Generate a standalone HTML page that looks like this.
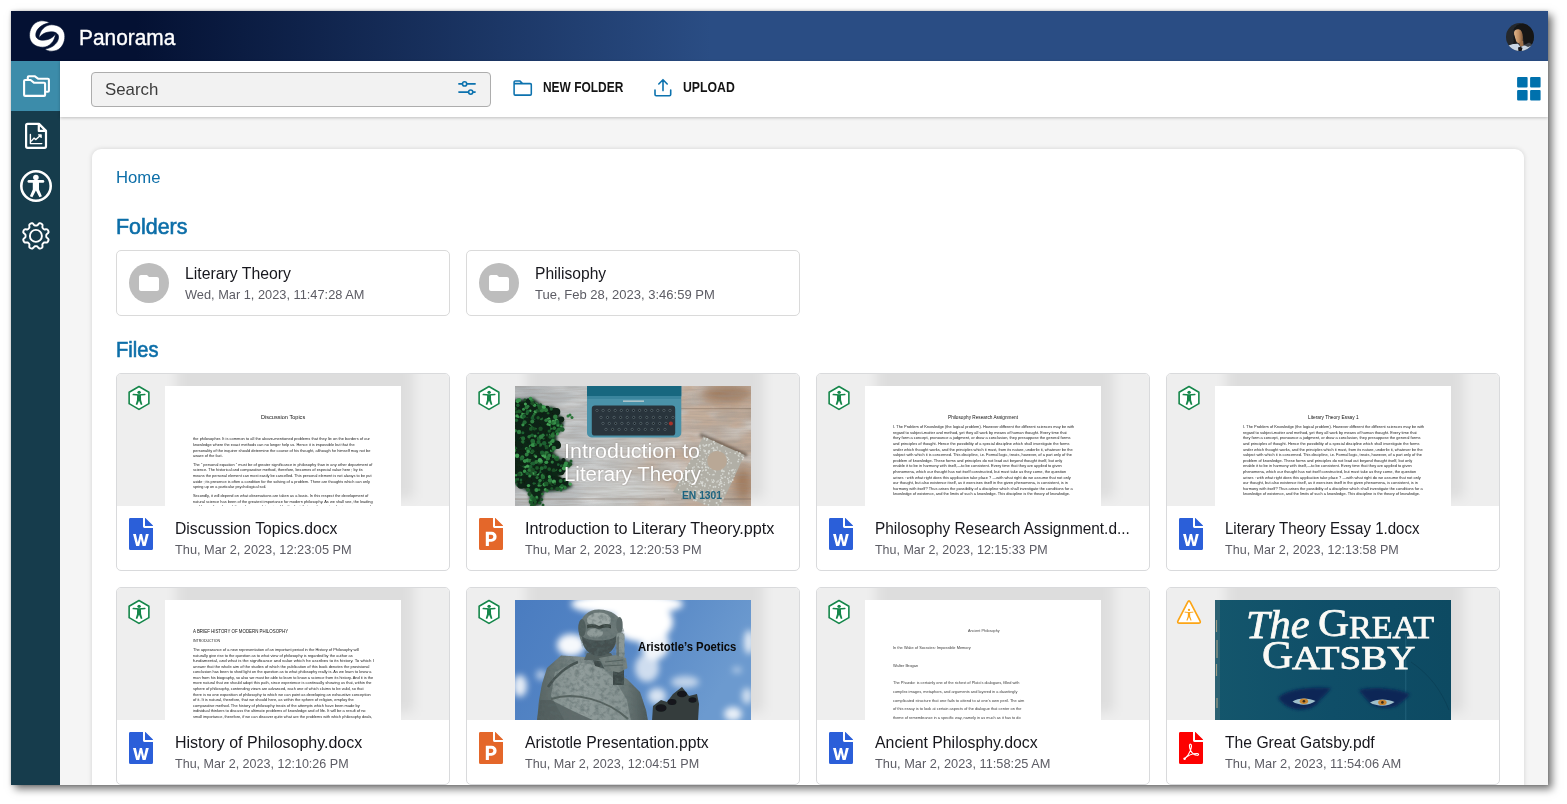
<!DOCTYPE html>
<html lang="en">
<head>
<meta charset="utf-8">
<title>Panorama</title>
<style>
*{box-sizing:border-box;margin:0;padding:0}
html,body{width:1567px;height:804px;overflow:hidden;background:#fff;font-family:"Liberation Sans",sans-serif}
#app{position:absolute;left:11px;top:11px;width:1537px;height:774px;background:#f5f5f5;box-shadow:4px 4px 8px rgba(0,0,0,.55),0 0 3px rgba(0,0,0,.18);overflow:hidden}
#pg{position:absolute;left:-11px;top:-11px;width:1567px;height:804px}
#pg>*,#pg svg{position:absolute}
.t{position:absolute;white-space:nowrap;line-height:1;transform-origin:0 0;display:block}
#hdr{left:11px;top:11px;width:1537px;height:50px;background:linear-gradient(90deg,#041133 0,#041133 125px,#2a4d84 700px,#2a4d84 100%)}
#side{left:11px;top:61px;width:49px;height:724px;background:#163c4c}
#sact{left:11px;top:61px;width:49px;height:50px;background:#3c8caa}
#tool{left:60px;top:61px;width:1488px;height:56px;background:#fff;box-shadow:0 1px 3px rgba(0,0,0,.22)}
#search{left:91px;top:72px;width:400px;height:35px;border:1px solid #adadad;border-radius:4px;background:#f2f2f2}
#panel{left:92px;top:149px;width:1432px;height:700px;background:#fff;border-radius:9px;box-shadow:0 0 5px rgba(0,0,0,.14)}
.fold{width:334px;height:66px;top:250px;border:1px solid #dadada;border-radius:5px;background:#fff}
.circ{width:40px;height:40px;top:263px;border-radius:50%;background:#bdbdbd}
.card{width:334px;height:198px;border:1px solid #d9dadc;border-radius:5px;background:#fff;overflow:hidden}
.card .top{position:absolute;left:0;top:0;width:332px;height:132px;background:#eee;overflow:hidden}
.card .th{position:absolute;left:48px;top:12px;width:236px;height:120px;background:#fff;overflow:hidden}
.card .sh{position:absolute;left:60px;top:-20px;width:236px;height:144px;background:rgba(0,0,0,.07);filter:blur(6px)}
.card svg{position:absolute}

</style>
</head>
<body>
<div id="app"><div id="pg">
<div id="hdr"></div>
<div id="side"></div>
<div id="sact"></div>
<div id="tool"></div>
<div id="search"></div>
<div id="panel"></div>
<div class="fold" style="left:116px"></div>
<div class="fold" style="left:466px"></div>
<div class="circ" style="left:129px"></div>
<div class="circ" style="left:479px"></div>
<!--ICONS-->
<svg style="left:20px;top:12px" width="60" height="48" viewBox="0 0 1005 804"><g fill="#fff" stroke="#041133" stroke-width="10" stroke-linejoin="round"><path d="M494 182C440 146 345 128 262 180C183 234 148 340 163 432C178 527 270 592 382 590C492 588 584 494 594 364C557 430 478 470 392 472C314 474 264 440 264 384C264 302 342 206 494 182Z"/><path d="M494 182C440 146 345 128 262 180C183 234 148 340 163 432C178 527 270 592 382 590C492 588 584 494 594 364C557 430 478 470 392 472C314 474 264 440 264 384C264 302 342 206 494 182Z" transform="rotate(180 455 402)"/></g></svg>
<svg style="left:11px;top:61px" width="49" height="50" viewBox="0 0 49 50" fill="none" stroke="#fff" stroke-width="2.1" stroke-linejoin="round" stroke-linecap="round"><path d="M16.8 18.4V16.2a1 1 0 0 1 1-1H23.6L27.4 17.8H36.9a1 1 0 0 1 1 1V29.8a1 1 0 0 1-1 1H35.4"/><path d="M14.1 19H19.6L23.2 21.8H33.1a1 1 0 0 1 1 1V33.9a1 1 0 0 1-1 1H14.1a1 1 0 0 1-1-1V20a1 1 0 0 1 1-1Z"/></svg>
<svg style="left:11px;top:111px" width="49" height="50" viewBox="0 0 49 50" fill="none" stroke="#fff" stroke-linejoin="round" stroke-linecap="round"><path stroke-width="2.2" d="M16.6 12.9H28L35 19.9V35.3a1.5 1.5 0 0 1-1.5 1.5H16.6a1.5 1.5 0 0 1-1.5-1.5V14.4a1.5 1.5 0 0 1 1.5-1.5ZM27.8 13.2V19.9H34.8"/><path stroke-width="1.4" d="M19.4 23.4V32.6H30.8M20.6 29.9L23 27.1L24.9 28.6L29.6 24.2M27.6 23.9H30.1V26.4"/></svg>
<svg style="left:11px;top:161px" width="49" height="50" viewBox="0 0 49 50"><circle cx="25" cy="25" r="14.7" fill="none" stroke="#fff" stroke-width="2.6"/><circle cx="24.9" cy="16.5" r="2.8" fill="#fff"/><rect x="16.5" y="19" width="16.8" height="2.8" rx="1.4" fill="#fff"/><path fill="#fff" d="M21.8 20.5H28V28.4L30.9 35.2L28.4 36.3L24.9 29.4L21.4 36.3L18.9 35.2L21.8 28.4Z"/></svg>
<svg style="left:0;top:0" width="72" height="262" viewBox="0 0 72 262" fill="none" stroke="#fff" stroke-width="1.9" stroke-linejoin="round"><path d="M35.90 225.55 L36.44 225.55 L36.99 225.49 L37.61 225.09 L38.44 223.97 L39.29 223.27 L40.01 223.25 L40.68 223.44 L41.33 223.71 L41.94 224.05 L42.44 224.57 L42.54 225.67 L42.33 227.05 L42.49 227.77 L42.84 228.20 L43.22 228.58 L43.60 228.96 L44.03 229.31 L44.75 229.47 L46.13 229.26 L47.23 229.36 L47.75 229.86 L48.09 230.47 L48.36 231.12 L48.55 231.79 L48.53 232.51 L47.83 233.36 L46.71 234.19 L46.31 234.81 L46.25 235.36 L46.25 235.90 L46.25 236.44 L46.31 236.99 L46.71 237.61 L47.83 238.44 L48.53 239.29 L48.55 240.01 L48.36 240.68 L48.09 241.33 L47.75 241.94 L47.23 242.44 L46.13 242.54 L44.75 242.33 L44.03 242.49 L43.60 242.84 L43.22 243.22 L42.84 243.60 L42.49 244.03 L42.33 244.75 L42.54 246.13 L42.44 247.23 L41.94 247.75 L41.33 248.09 L40.68 248.36 L40.01 248.55 L39.29 248.53 L38.44 247.83 L37.61 246.71 L36.99 246.31 L36.44 246.25 L35.90 246.25 L35.36 246.25 L34.81 246.31 L34.19 246.71 L33.36 247.83 L32.51 248.53 L31.79 248.55 L31.12 248.36 L30.47 248.09 L29.86 247.75 L29.36 247.23 L29.26 246.13 L29.47 244.75 L29.31 244.03 L28.96 243.60 L28.58 243.22 L28.20 242.84 L27.77 242.49 L27.05 242.33 L25.67 242.54 L24.57 242.44 L24.05 241.94 L23.71 241.33 L23.44 240.68 L23.25 240.01 L23.27 239.29 L23.97 238.44 L25.09 237.61 L25.49 236.99 L25.55 236.44 L25.55 235.90 L25.55 235.36 L25.49 234.81 L25.09 234.19 L23.97 233.36 L23.27 232.51 L23.25 231.79 L23.44 231.12 L23.71 230.47 L24.05 229.86 L24.57 229.36 L25.67 229.26 L27.05 229.47 L27.77 229.31 L28.20 228.96 L28.58 228.58 L28.96 228.20 L29.31 227.77 L29.47 227.05 L29.26 225.67 L29.36 224.57 L29.86 224.05 L30.47 223.71 L31.12 223.44 L31.79 223.25 L32.51 223.27 L33.36 223.97 L34.19 225.09 L34.81 225.49 L35.36 225.55Z"/><circle cx="35.9" cy="235.9" r="6"/></svg>
<svg style="left:450px;top:70px" width="290" height="36" viewBox="450 70 290 36" fill="none" stroke="#0c72ae" stroke-width="1.6" stroke-linecap="round" stroke-linejoin="round"><path d="M458.9 83.9H461.9M467.3 83.9H475.1M458.9 92.1H468M473.4 92.1H475.1"/><circle cx="464.6" cy="83.9" r="2.1"/><circle cx="470.7" cy="92.1" r="2.1"/><path stroke-width="1.55" d="M514.1 83.6V82a1.1 1.1 0 0 1 1.1-1.1H519.8L522.6 83.6H530.2a1.1 1.1 0 0 1 1.1 1.1V94a1.1 1.1 0 0 1-1.1 1.1H515.2a1.1 1.1 0 0 1-1.1-1.1ZM514.1 83.6H522.6"/><path stroke-width="1.6" d="M655 90V94.6a1.2 1.2 0 0 0 1.2 1.2H669.5a1.2 1.2 0 0 0 1.2-1.2V90M663 90.6V79.8M658.8 84L663 79.7L667.2 84"/></svg>
<svg style="left:1517px;top:77px" width="24" height="24" viewBox="0 0 24 24" fill="#0071ad"><rect x="0.1" y="0" width="10.5" height="10.6" rx="1"/><rect x="13.1" y="0" width="10.5" height="10.6" rx="1"/><rect x="0.1" y="13" width="10.5" height="10.6" rx="1"/><rect x="13.1" y="13" width="10.5" height="10.6" rx="1"/></svg>
<svg style="left:129px;top:263px" width="40" height="40" viewBox="0 0 40 40"><path transform="translate(8 8)" fill="#fff" d="M10 4H4c-1.1 0-1.99.9-1.99 2L2 18c0 1.100.9 2 2 2h16c1.100 0 2-.9 2-2V8c0-1.100-.9-2-2-2h-8l-2-2z"/></svg>
<svg style="left:479px;top:263px" width="40" height="40" viewBox="0 0 40 40"><path transform="translate(8 8)" fill="#fff" d="M10 4H4c-1.1 0-1.99.9-1.99 2L2 18c0 1.100.9 2 2 2h16c1.100 0 2-.9 2-2V8c0-1.100-.9-2-2-2h-8l-2-2z"/></svg>
<svg style="left:1506.300px;top:23px" width="28" height="28" viewBox="0 0 28 28"><defs><clipPath id="avc"><circle cx="14" cy="14" r="14"/></clipPath><filter id="avb" x="-10%" y="-10%" width="120%" height="120%"><feGaussianBlur stdDeviation=".55"/></filter><linearGradient id="avs" x1="0" x2="1" y1="0" y2="0"><stop offset="0" stop-color="#e0b48a"/><stop offset=".55" stop-color="#c08f63"/><stop offset="1" stop-color="#7d5638"/></linearGradient></defs>
<g clip-path="url(#avc)"><rect width="28" height="28" fill="#25282c"/><g filter="url(#avb)">
<path d="M7.500 8C8 2 16 -1 22 2C28 5 29 14 27 20C26 24 22 25 19 23L17 14L13 6L9 7Z" fill="#131518"/>
<path d="M8 9.500C8.500 6.500 12 5.500 14.500 7C16.500 9 17.200 13 16.800 17C16.500 19.500 14.500 20.800 12.500 20.300C10 19.500 8.200 15 8 9.500Z" fill="url(#avs)"/>
<path d="M13.200 19.500L17 17.500L17.600 23L14 23.500Z" fill="#9c6f4b"/>
<path d="M7.500 10C8 14 8 18 7 22L10.500 21L9.500 16Z" fill="#131518"/>
<path d="M1 23L7 21L12 20.800L14.500 24L18 22.500L23 21L28 23V29H0Z" fill="#c9d5e3"/>
<path d="M12 24.500L14.500 23.800L16.500 25L15.500 28.500H12.500Z" fill="#17191c"/>
<path d="M18 22L23 19.500L27 22L22 24Z" fill="#3d4248"/>
</g></g></svg>

<div class="card" style="left:116px;top:373px"><div class="top"><div class="sh"></div><div class="th"><span class="t" style="left:95.98px;top:29.41px;font-size:5.6px;font-weight:normal;color:#111;transform:scaleX(0.9965)">Discussion Topics</span><span class="t" style="left:27.86px;top:52.36px;font-size:3.8px;font-weight:normal;color:#1a1a1a;transform:scaleX(1.0491)">the philosopher. It is common to all the above-mentioned problems that they lie on the borders of our</span><span class="t" style="left:27.86px;top:58.02px;font-size:3.8px;font-weight:normal;color:#1a1a1a;transform:scaleX(1.0234)">knowledge where the exact methods can no longer help us. Hence it is impossible but that the</span><span class="t" style="left:27.86px;top:63.68px;font-size:3.8px;font-weight:normal;color:#1a1a1a;transform:scaleX(1.0415)">personality of the inquirer should determine the course of his thought, although he himself may not be</span><span class="t" style="left:27.86px;top:69.18px;font-size:3.8px;font-weight:normal;color:#1a1a1a;transform:scaleX(1.0217)">aware of the fact.</span><span class="t" style="left:27.86px;top:77.75px;font-size:3.8px;font-weight:normal;color:#1a1a1a;transform:scaleX(1.0413)">The “ personal equation ” must be of greater significance in philosophy than in any other department of</span><span class="t" style="left:27.86px;top:83.41px;font-size:3.8px;font-weight:normal;color:#1a1a1a;transform:scaleX(1.0270)">science. The historical and comparative method, therefore, becomes of especial value here ; by its</span><span class="t" style="left:27.86px;top:89.07px;font-size:3.8px;font-weight:normal;color:#1a1a1a;transform:scaleX(1.0172)">means the personal element can most easily be cancelled. This personal element is not always to be put</span><span class="t" style="left:27.86px;top:94.73px;font-size:3.8px;font-weight:normal;color:#1a1a1a;transform:scaleX(1.0264)">aside ; its presence is often a condition for the solving of a problem. There are thoughts which can only</span><span class="t" style="left:27.86px;top:100.39px;font-size:3.8px;font-weight:normal;color:#1a1a1a;transform:scaleX(1.0142)">spring up on a particular psychological soil.</span><span class="t" style="left:27.86px;top:108.96px;font-size:3.8px;font-weight:normal;color:#1a1a1a;transform:scaleX(1.0284)">Secondly, it will depend on what observations are taken as a basis. In this respect the development of</span><span class="t" style="left:27.86px;top:114.62px;font-size:3.8px;font-weight:normal;color:#1a1a1a;transform:scaleX(1.0285)">natural science has been of the greatest importance for modern philosophy. As we shall see, the leading</span><span class="t" style="left:27.85px;top:120.12px;font-size:3.8px;font-weight:normal;color:#1a1a1a;transform:scaleX(1.0659)">problems of modern philosophy were determined by the fact that modern natural science arose and</span></div><svg style="left:0;top:0" width="48" height="48" viewBox="0 0 48 48"><polygon points="22.00,12.55 31.87,18.25 31.87,29.65 22.00,35.35 12.13,29.65 12.13,18.25" fill="#fff" stroke="#15864a" stroke-width="1.6" stroke-linejoin="round"/><g transform="translate(22.0 23.95)" fill="#15864a"><circle cx="0.1" cy="-5.6" r="1.7"/><path d="M-5.7 -3.4Q0 -2.5 5.8 -3.4" fill="none" stroke="#15864a" stroke-width="1.6" stroke-linecap="round"/><path d="M-1.9 -2.9H2L2.1 2L3.4 6.6L1.9 7.1L0.05 2.8L-1.8 7.1L-3.3 6.6L-2 2Z"/></g></svg></div><svg style="left:12px;top:144px" width="24" height="32" viewBox="0 0 24 32"><path fill="#2b5fd9" d="M1.4 0H14V8.6a1.4 1.4 0 0 0 1.4 1.4H24V30.5a1.5 1.5 0 0 1-1.5 1.5H1.5A1.5 1.5 0 0 1 0 30.5V1.4A1.4 1.4 0 0 1 1.4 0ZM16 0H16.4L24 7.6V8H16Z"/><path fill="#fff" d="M4 16H6.9L8.8 24.4L10.8 16H13L15 24.4L16.9 16H19.8L16.6 28H13.6L11.9 20.8L10.2 28H7.2Z"/></svg></div>
<div class="card" style="left:466px;top:373px"><div class="top"><div class="sh"></div><div class="th"><svg style="left:0;top:0" width="236" height="121" viewBox="0 0 236 121"><defs>
<linearGradient id="wd" x1="0" x2="1" y1="0" y2="0"><stop offset="0" stop-color="#a9aeb1"/><stop offset=".28" stop-color="#bcbfc0"/><stop offset=".5" stop-color="#c3c2bf"/><stop offset=".72" stop-color="#bdb2a8"/><stop offset="1" stop-color="#b3a293"/></linearGradient>
<linearGradient id="mk" x1="0" x2="1" y1="0" y2="0"><stop offset=".4" stop-color="#000"/><stop offset=".72" stop-color="#fff"/></linearGradient>
<mask id="mr"><rect width="236" height="121" fill="url(#mk)"/></mask>
<filter id="b2" x="-20%" y="-20%" width="140%" height="140%"><feGaussianBlur stdDeviation="1.6"/></filter>
<filter id="b1" x="-20%" y="-20%" width="140%" height="140%"><feGaussianBlur stdDeviation=".55"/></filter>
<filter id="b4" x="-30%" y="-30%" width="160%" height="160%"><feGaussianBlur stdDeviation="5"/></filter>
<filter id="gr" x="0" y="0" width="100%" height="100%"><feTurbulence type="fractalNoise" baseFrequency=".03 .45" numOctaves="3" seed="4"/><feColorMatrix values="0 0 0 0 .33  0 0 0 0 .29  0 0 0 0 .26  1.3 .3 0 0 -.6"/></filter>
<filter id="bl" x="0" y="0" width="100%" height="100%"><feTurbulence type="fractalNoise" baseFrequency=".035 .075" numOctaves="3" seed="9"/><feColorMatrix values="0 0 0 0 .56  0 0 0 0 .41  0 0 0 0 .31  3 0 0 0 -1.05"/></filter>
<filter id="lt" x="0" y="0" width="100%" height="100%"><feTurbulence type="fractalNoise" baseFrequency=".02 .06" numOctaves="2" seed="21"/><feColorMatrix values="0 0 0 0 .84  0 0 0 0 .85  0 0 0 0 .85  0 2.4 0 0 -1.0"/></filter>
</defs>
<rect width="236" height="121" fill="url(#wd)"/>
<rect width="236" height="121" filter="url(#lt)" opacity=".7"/>
<g mask="url(#mr)"><rect width="236" height="121" filter="url(#bl)" opacity=".85"/></g>
<g filter="url(#b4)" opacity=".8"><ellipse cx="212" cy="8" rx="26" ry="9" fill="#99704f"/><ellipse cx="228" cy="98" rx="9" ry="16" fill="#9a6f50"/><ellipse cx="110" cy="104" rx="46" ry="9" fill="#d2d4d3"/></g>
<rect width="236" height="121" filter="url(#gr)" opacity=".6"/>
<path d="M166 22.7H236M0 113H150M166 113H236" stroke="#6d5a4b" stroke-width=".7" opacity=".6"/>
<rect x="72" y="-4" width="94.3" height="55.4" rx="4.5" fill="#4a92a9"/>
<path d="M72 0H166.3V10.3H72Z" fill="#17677f"/>
<path d="M72.3 10.300H166V13H72.3Z" fill="#3a859d"/>
<rect x="108" y="14.500" width="21" height="1.300" fill="#c5d0d3"/>
<rect x="76.8" y="19.6" width="83.4" height="30" rx="3.2" fill="#29343c"/>
<g filter="url(#b1)"><circle cx="82.0" cy="24.4" r="1.1" fill="#10181d" stroke="#76868d" stroke-width=".55"/><circle cx="88.1" cy="24.4" r="1.1" fill="#10181d" stroke="#76868d" stroke-width=".55"/><circle cx="94.2" cy="24.4" r="1.1" fill="#10181d" stroke="#76868d" stroke-width=".55"/><circle cx="100.2" cy="24.4" r="1.1" fill="#10181d" stroke="#76868d" stroke-width=".55"/><circle cx="106.3" cy="24.4" r="1.1" fill="#10181d" stroke="#76868d" stroke-width=".55"/><circle cx="112.4" cy="24.4" r="1.1" fill="#10181d" stroke="#76868d" stroke-width=".55"/><circle cx="118.5" cy="24.4" r="1.1" fill="#10181d" stroke="#76868d" stroke-width=".55"/><circle cx="124.6" cy="24.4" r="1.1" fill="#10181d" stroke="#76868d" stroke-width=".55"/><circle cx="130.7" cy="24.4" r="1.1" fill="#10181d" stroke="#76868d" stroke-width=".55"/><circle cx="136.8" cy="24.4" r="1.1" fill="#10181d" stroke="#76868d" stroke-width=".55"/><circle cx="142.8" cy="24.4" r="1.1" fill="#10181d" stroke="#76868d" stroke-width=".55"/><circle cx="148.9" cy="24.4" r="1.1" fill="#10181d" stroke="#76868d" stroke-width=".55"/><circle cx="155.0" cy="24.4" r="1.1" fill="#10181d" stroke="#76868d" stroke-width=".55"/><circle cx="86.0" cy="31.4" r="1.1" fill="#10181d" stroke="#76868d" stroke-width=".55"/><circle cx="92.5" cy="31.4" r="1.1" fill="#10181d" stroke="#76868d" stroke-width=".55"/><circle cx="99.1" cy="31.4" r="1.1" fill="#10181d" stroke="#76868d" stroke-width=".55"/><circle cx="105.6" cy="31.4" r="1.1" fill="#10181d" stroke="#76868d" stroke-width=".55"/><circle cx="112.2" cy="31.4" r="1.1" fill="#10181d" stroke="#76868d" stroke-width=".55"/><circle cx="118.7" cy="31.4" r="1.1" fill="#10181d" stroke="#76868d" stroke-width=".55"/><circle cx="125.3" cy="31.4" r="1.1" fill="#10181d" stroke="#76868d" stroke-width=".55"/><circle cx="131.8" cy="31.4" r="1.1" fill="#10181d" stroke="#76868d" stroke-width=".55"/><circle cx="138.4" cy="31.4" r="1.1" fill="#10181d" stroke="#76868d" stroke-width=".55"/><circle cx="144.9" cy="31.4" r="1.1" fill="#10181d" stroke="#76868d" stroke-width=".55"/><circle cx="151.5" cy="31.4" r="1.1" fill="#10181d" stroke="#76868d" stroke-width=".55"/><circle cx="158.0" cy="31.4" r="1.1" fill="#10181d" stroke="#76868d" stroke-width=".55"/><circle cx="88.0" cy="37.4" r="1.1" fill="#10181d" stroke="#76868d" stroke-width=".55"/><circle cx="94.3" cy="37.4" r="1.1" fill="#10181d" stroke="#76868d" stroke-width=".55"/><circle cx="100.6" cy="37.4" r="1.1" fill="#10181d" stroke="#76868d" stroke-width=".55"/><circle cx="106.9" cy="37.4" r="1.1" fill="#10181d" stroke="#76868d" stroke-width=".55"/><circle cx="113.2" cy="37.4" r="1.1" fill="#10181d" stroke="#76868d" stroke-width=".55"/><circle cx="119.5" cy="37.4" r="1.1" fill="#10181d" stroke="#76868d" stroke-width=".55"/><circle cx="125.8" cy="37.4" r="1.1" fill="#10181d" stroke="#76868d" stroke-width=".55"/><circle cx="132.1" cy="37.4" r="1.1" fill="#10181d" stroke="#76868d" stroke-width=".55"/><circle cx="138.4" cy="37.4" r="1.1" fill="#10181d" stroke="#76868d" stroke-width=".55"/><circle cx="144.7" cy="37.4" r="1.1" fill="#10181d" stroke="#76868d" stroke-width=".55"/><circle cx="151.0" cy="37.4" r="1.1" fill="#10181d" stroke="#76868d" stroke-width=".55"/><circle cx="91.0" cy="43.4" r="1.1" fill="#10181d" stroke="#76868d" stroke-width=".55"/><circle cx="97.6" cy="43.4" r="1.1" fill="#10181d" stroke="#76868d" stroke-width=".55"/><circle cx="104.1" cy="43.4" r="1.1" fill="#10181d" stroke="#76868d" stroke-width=".55"/><circle cx="110.7" cy="43.4" r="1.1" fill="#10181d" stroke="#76868d" stroke-width=".55"/><circle cx="117.2" cy="43.4" r="1.1" fill="#10181d" stroke="#76868d" stroke-width=".55"/><circle cx="123.8" cy="43.4" r="1.1" fill="#10181d" stroke="#76868d" stroke-width=".55"/><circle cx="130.3" cy="43.4" r="1.1" fill="#10181d" stroke="#76868d" stroke-width=".55"/><circle cx="136.9" cy="43.4" r="1.1" fill="#10181d" stroke="#76868d" stroke-width=".55"/><circle cx="143.4" cy="43.4" r="1.1" fill="#10181d" stroke="#76868d" stroke-width=".55"/><circle cx="150.0" cy="43.4" r="1.1" fill="#10181d" stroke="#76868d" stroke-width=".55"/><circle cx="155.9" cy="37.5" r="2" fill="#a8322a"/></g>
<polygon points="7.3,13.4 18,11.9 28.9,21.1 38.1,21.1 42.8,27.3 48.9,35 47.4,44.3 41.2,48.9 42.8,59.7 38.1,65.9 44.3,72.1 58.2,76.7 48.9,84.4 44.3,90.6 58.2,99.9 48.9,104.5 28.9,106 25.8,118.4 16.5,121 13.4,106 -2,96.8 -2,13.4" fill="#0c2515" filter="url(#b2)"/>
<g filter="url(#b1)"><circle cx="45.7" cy="33.7" r="1.4" fill="#2d7b3f"/><circle cx="0.2" cy="87.5" r="1.8" fill="#2a7439"/><circle cx="15.9" cy="109.6" r="1.8" fill="#2d7b3f"/><circle cx="11.9" cy="34.7" r="1.3" fill="#2a7439"/><circle cx="16.0" cy="60.6" r="2.1" fill="#43a054"/><circle cx="38.4" cy="70.2" r="1.9" fill="#2a7439"/><circle cx="42.7" cy="38.8" r="2.1" fill="#1f6030"/><circle cx="17.0" cy="59.0" r="1.3" fill="#2a7439"/><circle cx="12.3" cy="30.5" r="1.8" fill="#2d7b3f"/><circle cx="11.5" cy="62.6" r="1.6" fill="#359049"/><circle cx="36.0" cy="42.8" r="2.1" fill="#43a054"/><circle cx="8.5" cy="25.8" r="1.2" fill="#246a34"/><circle cx="38.6" cy="55.2" r="2.2" fill="#246a34"/><circle cx="17.7" cy="54.1" r="2.0" fill="#1f6030"/><circle cx="25.2" cy="99.1" r="1.5" fill="#43a054"/><circle cx="9.5" cy="70.8" r="1.1" fill="#2d7b3f"/><circle cx="3.4" cy="30.9" r="1.2" fill="#359049"/><circle cx="14.9" cy="41.6" r="1.7" fill="#43a054"/><circle cx="7.0" cy="89.2" r="1.5" fill="#1c5a2b"/><circle cx="33.3" cy="29.3" r="1.4" fill="#2a7439"/><circle cx="38.1" cy="51.4" r="1.8" fill="#246a34"/><circle cx="27.2" cy="91.1" r="1.3" fill="#2d7b3f"/><circle cx="27.4" cy="49.7" r="1.1" fill="#246a34"/><circle cx="20.8" cy="85.8" r="2.1" fill="#1a4f27"/><circle cx="7.1" cy="32.7" r="2.0" fill="#43a054"/><circle cx="6.7" cy="32.4" r="1.3" fill="#1f6030"/><circle cx="36.5" cy="64.5" r="1.5" fill="#359049"/><circle cx="2.3" cy="15.8" r="1.7" fill="#43a054"/><circle cx="22.2" cy="27.2" r="1.3" fill="#246a34"/><circle cx="31.5" cy="61.1" r="2.2" fill="#1a4f27"/><circle cx="6.9" cy="54.8" r="1.3" fill="#1c5a2b"/><circle cx="11.8" cy="18.5" r="2.0" fill="#2d7b3f"/><circle cx="16.5" cy="96.1" r="1.4" fill="#246a34"/><circle cx="50.2" cy="102.0" r="1.6" fill="#2d7b3f"/><circle cx="30.4" cy="103.6" r="1.5" fill="#43a054"/><circle cx="18" cy="114" r="1.5" fill="#1f6030"/><circle cx="30.5" cy="22.1" r="1.1" fill="#359049"/><circle cx="29.2" cy="86.1" r="1.2" fill="#246a34"/><circle cx="23.8" cy="95.7" r="2.2" fill="#2d7b3f"/><circle cx="31.9" cy="97.5" r="1.2" fill="#246a34"/><circle cx="36.5" cy="41.7" r="2.1" fill="#1f6030"/><circle cx="8.9" cy="26.6" r="1.7" fill="#2a7439"/><circle cx="22.2" cy="43.2" r="1.7" fill="#43a054"/><circle cx="25.5" cy="73.1" r="1.4" fill="#2d7b3f"/><circle cx="-1.1" cy="50.4" r="1.3" fill="#2d7b3f"/><circle cx="14.6" cy="98.5" r="1.2" fill="#1c5a2b"/><circle cx="34.8" cy="39.4" r="1.3" fill="#1c5a2b"/><circle cx="36.2" cy="48.2" r="2.0" fill="#43a054"/><circle cx="16.0" cy="115.7" r="2.3" fill="#1c5a2b"/><circle cx="25" cy="117" r="1.5" fill="#1a4f27"/><circle cx="15.2" cy="28.8" r="1.4" fill="#1a4f27"/><circle cx="19.4" cy="33.9" r="1.1" fill="#1f6030"/><circle cx="55.2" cy="98.1" r="1.7" fill="#43a054"/><circle cx="13.9" cy="54.6" r="1.3" fill="#43a054"/><circle cx="3.2" cy="98.8" r="2.1" fill="#1c5a2b"/><circle cx="40.5" cy="83.6" r="1.7" fill="#1f6030"/><circle cx="46.3" cy="39.9" r="1.5" fill="#43a054"/><circle cx="29.3" cy="73.0" r="2.1" fill="#1f6030"/><circle cx="7.2" cy="24.3" r="1.8" fill="#246a34"/><circle cx="9.5" cy="85.3" r="1.8" fill="#359049"/><circle cx="20.5" cy="25.5" r="1.8" fill="#43a054"/><circle cx="28.4" cy="79.6" r="1.7" fill="#43a054"/><circle cx="12.6" cy="74.3" r="2.1" fill="#359049"/><circle cx="40.2" cy="29.7" r="1.3" fill="#2a7439"/><circle cx="36.2" cy="58.1" r="1.5" fill="#359049"/><circle cx="20.9" cy="18.7" r="2.1" fill="#359049"/><circle cx="20.7" cy="84.2" r="1.9" fill="#2a7439"/><circle cx="13.2" cy="14.7" r="2.0" fill="#43a054"/><circle cx="28.7" cy="44.2" r="1.9" fill="#246a34"/><circle cx="42.2" cy="47.7" r="1.7" fill="#359049"/><circle cx="20.0" cy="88.4" r="2.2" fill="#1a4f27"/><circle cx="32.0" cy="105.0" r="1.2" fill="#1c5a2b"/><circle cx="24.3" cy="27.6" r="1.3" fill="#1f6030"/><circle cx="56" cy="75" r="1.5" fill="#1c5a2b"/><circle cx="24.7" cy="76.7" r="1.9" fill="#1a4f27"/><circle cx="-0.1" cy="57.9" r="1.9" fill="#1f6030"/><circle cx="27.7" cy="82.4" r="1.4" fill="#1c5a2b"/><circle cx="20" cy="118" r="1.5" fill="#1a4f27"/><circle cx="20.1" cy="43.5" r="1.3" fill="#1a4f27"/><circle cx="35.1" cy="50.9" r="1.8" fill="#1c5a2b"/><circle cx="23.3" cy="88.4" r="1.4" fill="#43a054"/><circle cx="14.5" cy="69.8" r="1.5" fill="#246a34"/><circle cx="25.1" cy="85.4" r="1.9" fill="#1f6030"/><circle cx="15.7" cy="93.9" r="1.4" fill="#1c5a2b"/><circle cx="20.3" cy="77.6" r="1.6" fill="#2d7b3f"/><circle cx="42.2" cy="27.4" r="1.1" fill="#246a34"/><circle cx="7.2" cy="80.5" r="1.9" fill="#1a4f27"/><circle cx="23.6" cy="53.3" r="1.7" fill="#1a4f27"/><circle cx="9.9" cy="13.8" r="1.4" fill="#1a4f27"/><circle cx="40.9" cy="92.6" r="1.6" fill="#1a4f27"/><circle cx="3.7" cy="25.4" r="1.5" fill="#2d7b3f"/><circle cx="30.6" cy="68.3" r="2.2" fill="#2a7439"/><circle cx="15.9" cy="113.5" r="1.6" fill="#43a054"/><circle cx="6.5" cy="42.2" r="1.7" fill="#359049"/><circle cx="6.5" cy="67.4" r="1.2" fill="#2a7439"/><circle cx="3.1" cy="93.1" r="1.7" fill="#1c5a2b"/><circle cx="3.7" cy="25.6" r="1.9" fill="#2d7b3f"/><circle cx="43.8" cy="39.3" r="1.9" fill="#1c5a2b"/><circle cx="7.3" cy="31.4" r="1.9" fill="#1a4f27"/><circle cx="36.6" cy="102.3" r="1.1" fill="#1a4f27"/><circle cx="37.8" cy="62.1" r="1.1" fill="#43a054"/><circle cx="26.6" cy="113.5" r="1.5" fill="#1a4f27"/><circle cx="-0.7" cy="64.4" r="1.9" fill="#2a7439"/><circle cx="37.1" cy="98.0" r="1.5" fill="#246a34"/><circle cx="38.3" cy="51.2" r="1.9" fill="#1a4f27"/><circle cx="28" cy="119" r="1.5" fill="#1c5a2b"/><circle cx="4.0" cy="73.3" r="2.1" fill="#2a7439"/><circle cx="21.6" cy="96.7" r="1.5" fill="#2d7b3f"/><circle cx="19.4" cy="57.4" r="1.6" fill="#43a054"/><circle cx="1.8" cy="40.1" r="1.8" fill="#246a34"/><circle cx="38.9" cy="77.6" r="1.5" fill="#2a7439"/><circle cx="44.3" cy="97.1" r="1.6" fill="#43a054"/><circle cx="33.5" cy="32.3" r="1.7" fill="#43a054"/><circle cx="14.8" cy="73.1" r="1.6" fill="#2a7439"/><circle cx="9.8" cy="74.9" r="2.0" fill="#359049"/><circle cx="27.7" cy="82.5" r="1.2" fill="#1a4f27"/><circle cx="7.2" cy="28.0" r="1.1" fill="#43a054"/><circle cx="44.1" cy="43.6" r="2.2" fill="#246a34"/><circle cx="9.7" cy="98.4" r="1.3" fill="#2a7439"/><circle cx="1.3" cy="45.0" r="1.8" fill="#2a7439"/><circle cx="8.3" cy="25.9" r="1.8" fill="#43a054"/><circle cx="-0.7" cy="87.4" r="1.4" fill="#2d7b3f"/><circle cx="32.1" cy="104.7" r="1.6" fill="#2a7439"/><circle cx="32.9" cy="22.0" r="1.4" fill="#246a34"/><circle cx="6.1" cy="52.6" r="1.6" fill="#43a054"/><circle cx="26.6" cy="93.3" r="2.2" fill="#1f6030"/><circle cx="4.1" cy="98.0" r="1.7" fill="#1f6030"/><circle cx="33.6" cy="38.5" r="2.1" fill="#43a054"/><circle cx="11.0" cy="51.1" r="1.6" fill="#246a34"/><circle cx="2.9" cy="57.7" r="1.6" fill="#359049"/><circle cx="1.0" cy="61.4" r="1.6" fill="#1c5a2b"/><circle cx="35.3" cy="59.8" r="1.6" fill="#359049"/><circle cx="6.6" cy="32.8" r="1.9" fill="#1f6030"/><circle cx="8.4" cy="32.7" r="1.5" fill="#1c5a2b"/><circle cx="34.6" cy="35.4" r="2.2" fill="#1a4f27"/><circle cx="33.5" cy="79.4" r="1.8" fill="#246a34"/><circle cx="20.3" cy="115.6" r="1.7" fill="#1c5a2b"/><circle cx="26.3" cy="32.6" r="1.7" fill="#246a34"/><circle cx="13.1" cy="103.7" r="2.1" fill="#1c5a2b"/><circle cx="22.1" cy="40.9" r="2.2" fill="#246a34"/><circle cx="18.7" cy="41.0" r="1.7" fill="#1c5a2b"/><circle cx="38.5" cy="39.3" r="1.4" fill="#246a34"/><circle cx="29.4" cy="72.8" r="1.4" fill="#246a34"/><circle cx="41.4" cy="34.9" r="2.2" fill="#43a054"/><circle cx="37.6" cy="64.6" r="1.5" fill="#1c5a2b"/><circle cx="2.3" cy="92.6" r="1.7" fill="#1f6030"/><circle cx="5.8" cy="90.7" r="2.1" fill="#43a054"/><circle cx="14.5" cy="69.3" r="2.0" fill="#1c5a2b"/><circle cx="39.9" cy="23.7" r="1.8" fill="#359049"/><circle cx="23.5" cy="50.5" r="2.3" fill="#1c5a2b"/><circle cx="11.6" cy="42.0" r="1.8" fill="#1c5a2b"/><circle cx="36.5" cy="55.8" r="1.5" fill="#43a054"/><circle cx="42.4" cy="35.8" r="2.0" fill="#1f6030"/><circle cx="21.1" cy="23.3" r="2.2" fill="#246a34"/><circle cx="6.7" cy="55.9" r="2.2" fill="#246a34"/><circle cx="40.8" cy="59.5" r="1.9" fill="#2d7b3f"/><circle cx="42.4" cy="102.7" r="2.2" fill="#1a4f27"/><circle cx="48.2" cy="98.9" r="2.1" fill="#359049"/><circle cx="22" cy="112" r="1.5" fill="#1f6030"/><circle cx="27.6" cy="56.3" r="1.2" fill="#2a7439"/><circle cx="10.1" cy="50.8" r="1.3" fill="#246a34"/><circle cx="20.7" cy="87.0" r="2.1" fill="#1a4f27"/><circle cx="37.3" cy="93.6" r="1.4" fill="#1a4f27"/><circle cx="16.7" cy="66.3" r="1.8" fill="#2d7b3f"/><circle cx="14.6" cy="40.1" r="1.9" fill="#43a054"/><circle cx="30.2" cy="67.1" r="1.2" fill="#1c5a2b"/><circle cx="26.6" cy="94.9" r="1.7" fill="#2a7439"/><circle cx="21.4" cy="104.0" r="2.0" fill="#359049"/><circle cx="46.2" cy="100.4" r="2.2" fill="#2a7439"/><circle cx="19.8" cy="69.5" r="1.2" fill="#246a34"/><circle cx="25.8" cy="63.8" r="1.8" fill="#1c5a2b"/><circle cx="24.9" cy="65.3" r="1.4" fill="#43a054"/><circle cx="37.2" cy="62.1" r="1.7" fill="#2a7439"/><circle cx="28.6" cy="86.5" r="2.0" fill="#246a34"/><circle cx="8.7" cy="91.7" r="1.1" fill="#1a4f27"/><circle cx="32.8" cy="25.0" r="1.5" fill="#359049"/><circle cx="13.3" cy="21.2" r="2.1" fill="#2d7b3f"/><circle cx="23.3" cy="25.8" r="1.9" fill="#1a4f27"/><circle cx="29.1" cy="51.7" r="1.2" fill="#1c5a2b"/><circle cx="35.8" cy="43.8" r="1.8" fill="#359049"/><circle cx="-1.0" cy="39.9" r="1.2" fill="#2d7b3f"/><circle cx="51.0" cy="95.6" r="2.2" fill="#2d7b3f"/><circle cx="27.5" cy="21.2" r="2.1" fill="#2d7b3f"/><circle cx="18.4" cy="42.9" r="1.2" fill="#1a4f27"/><circle cx="21.2" cy="75.9" r="1.9" fill="#2a7439"/><circle cx="28.9" cy="82.2" r="1.6" fill="#1a4f27"/><circle cx="20.1" cy="20.5" r="3.0" fill="#0b2113"/><circle cx="18.9" cy="93.2" r="3.5" fill="#0b2113"/><circle cx="41.1" cy="92.4" r="2.2" fill="#0b2113"/><circle cx="23.7" cy="40.4" r="2.7" fill="#0b2113"/><circle cx="38.3" cy="96.4" r="2.7" fill="#0b2113"/><circle cx="6.2" cy="53.4" r="2.2" fill="#0b2113"/><circle cx="1.1" cy="49.8" r="3.8" fill="#0b2113"/><circle cx="48.7" cy="84.2" r="2.3" fill="#0b2113"/><circle cx="41.9" cy="58.3" r="3.0" fill="#0b2113"/><circle cx="12.7" cy="28.7" r="2.9" fill="#0b2113"/><circle cx="11.7" cy="34.9" r="3.3" fill="#0b2113"/><circle cx="43.2" cy="94.6" r="2.3" fill="#0b2113"/><circle cx="1.3" cy="57.8" r="2.3" fill="#0b2113"/><circle cx="10.7" cy="50.2" r="3.7" fill="#0b2113"/><circle cx="23.3" cy="31.1" r="2.0" fill="#0b2113"/><circle cx="9.7" cy="66.2" r="2.3" fill="#0b2113"/><circle cx="2.7" cy="57.5" r="2.9" fill="#0b2113"/><circle cx="39.2" cy="81.3" r="2.8" fill="#0b2113"/><circle cx="10.3" cy="98.2" r="3.8" fill="#0b2113"/><circle cx="38.7" cy="24.6" r="2.4" fill="#0b2113"/><circle cx="22.2" cy="62.2" r="2.4" fill="#0b2113"/><circle cx="33.8" cy="27.2" r="2.4" fill="#0b2113"/><circle cx="18.0" cy="62.9" r="3.9" fill="#0b2113"/><circle cx="7.0" cy="92.4" r="3.1" fill="#0b2113"/><circle cx="31.1" cy="74.2" r="4.0" fill="#0b2113"/><circle cx="25.6" cy="68.1" r="3.0" fill="#0b2113"/><circle cx="38.4" cy="56.1" r="2.0" fill="#0b2113"/><circle cx="1.5" cy="74.2" r="3.9" fill="#0b2113"/><circle cx="39.6" cy="94.2" r="3.6" fill="#0b2113"/><circle cx="13.9" cy="55.3" r="2.3" fill="#0b2113"/><circle cx="27.6" cy="81.0" r="2.9" fill="#0b2113"/><circle cx="-1.4" cy="50.1" r="2.0" fill="#0b2113"/><circle cx="36.9" cy="61.6" r="2.3" fill="#0b2113"/><circle cx="22.3" cy="56.0" r="2.5" fill="#0b2113"/><circle cx="24.8" cy="51.7" r="2.4" fill="#0b2113"/><circle cx="4.9" cy="67.5" r="3.5" fill="#0b2113"/><circle cx="33.6" cy="24.6" r="2.6" fill="#0b2113"/><circle cx="30.7" cy="29.2" r="3.2" fill="#0b2113"/><circle cx="24.2" cy="29.4" r="3.2" fill="#0b2113"/><circle cx="13.6" cy="41.3" r="2.5" fill="#0b2113"/><circle cx="13.3" cy="20.7" r="2.8" fill="#0b2113"/><circle cx="-0.1" cy="25.4" r="2.5" fill="#0b2113"/><circle cx="4.2" cy="58.6" r="3.7" fill="#0b2113"/><circle cx="39.9" cy="78.1" r="3.8" fill="#0b2113"/><circle cx="29.6" cy="84.6" r="3.5" fill="#0b2113"/><circle cx="21.1" cy="84.4" r="3.4" fill="#0b2113"/><circle cx="42.8" cy="96.8" r="3.5" fill="#0b2113"/><circle cx="3.9" cy="26.1" r="2.2" fill="#0b2113"/><circle cx="27.9" cy="68.0" r="3.1" fill="#0b2113"/><circle cx="3.4" cy="42.8" r="2.7" fill="#0b2113"/><circle cx="23.6" cy="46.5" r="3.8" fill="#0b2113"/><circle cx="9.0" cy="43.9" r="3.2" fill="#0b2113"/><circle cx="32.7" cy="79.2" r="2.2" fill="#0b2113"/><circle cx="15.1" cy="70.3" r="2.7" fill="#0b2113"/><circle cx="0.2" cy="19.1" r="2.8" fill="#0b2113"/><circle cx="26.5" cy="65.3" r="3.0" fill="#0b2113"/><circle cx="26.0" cy="56.1" r="3.9" fill="#0b2113"/><circle cx="9.1" cy="70.0" r="3.2" fill="#0b2113"/><circle cx="22.8" cy="70.8" r="2.8" fill="#0b2113"/><circle cx="34.6" cy="89.0" r="2.9" fill="#0b2113"/><circle cx="28.5" cy="69.5" r="2.6" fill="#0b2113"/><circle cx="20.2" cy="92.4" r="2.0" fill="#0b2113"/><circle cx="-1.7" cy="86.5" r="3.8" fill="#0b2113"/><circle cx="2.7" cy="38.5" r="3.7" fill="#0b2113"/><circle cx="26.0" cy="43.9" r="3.9" fill="#0b2113"/><circle cx="-0.6" cy="80.8" r="3.5" fill="#0b2113"/><circle cx="24.3" cy="95.8" r="3.7" fill="#0b2113"/><circle cx="48.5" cy="74.0" r="2.1" fill="#0b2113"/><circle cx="25.3" cy="62.4" r="3.8" fill="#0b2113"/><circle cx="26.6" cy="91.0" r="3.3" fill="#0b2113"/><circle cx="9.7" cy="44.2" r="2.0" fill="#0b2113"/><circle cx="9.6" cy="23.8" r="3.5" fill="#0b2113"/><circle cx="1.1" cy="73.0" r="3.2" fill="#0b2113"/><circle cx="15.5" cy="29.9" r="2.6" fill="#0b2113"/><circle cx="21.1" cy="79.9" r="2.2" fill="#0b2113"/><circle cx="40.5" cy="95.1" r="2.2" fill="#0b2113"/><circle cx="17.7" cy="54.4" r="2.0" fill="#0b2113"/><circle cx="23.4" cy="21.7" r="2.0" fill="#0b2113"/><circle cx="48.4" cy="94.3" r="1.9" fill="#0b2113"/><circle cx="13.5" cy="43.5" r="3.0" fill="#0b2113"/><circle cx="3.0" cy="87.3" r="2.5" fill="#0b2113"/><circle cx="46.4" cy="33.2" r="2.8" fill="#0b2113"/><circle cx="28.5" cy="41.4" r="2.0" fill="#0b2113"/><circle cx="19.6" cy="83.6" r="1.9" fill="#0b2113"/><circle cx="13.4" cy="92.5" r="3.6" fill="#0b2113"/><circle cx="18.7" cy="20.6" r="3.7" fill="#0b2113"/><circle cx="19.6" cy="49.4" r="2.7" fill="#0b2113"/><circle cx="29.1" cy="51.6" r="2.9" fill="#0b2113"/><circle cx="38.3" cy="40.4" r="2.4" fill="#0b2113"/><circle cx="13.2" cy="93.6" r="3.0" fill="#0b2113"/><circle cx="17.2" cy="53.2" r="1.9" fill="#0b2113"/><circle cx="28.2" cy="82.5" r="2.0" fill="#0b2113"/><circle cx="37.4" cy="27.5" r="2.3" fill="#0b2113"/><circle cx="-1.6" cy="60.1" r="2.2" fill="#0b2113"/><circle cx="19.8" cy="48.6" r="3.6" fill="#0b2113"/><circle cx="32.0" cy="22.3" r="2.6" fill="#0b2113"/><circle cx="12.0" cy="47.6" r="3.9" fill="#0b2113"/><circle cx="34.3" cy="81.7" r="2.1" fill="#0b2113"/><circle cx="13.6" cy="96.4" r="3.8" fill="#0b2113"/><circle cx="41.5" cy="58.4" r="4.0" fill="#0b2113"/><circle cx="45.9" cy="85.6" r="3.6" fill="#0b2113"/><circle cx="25.9" cy="62.0" r="3.8" fill="#0b2113"/><circle cx="29.2" cy="25.4" r="1.8" fill="#0b2113"/><circle cx="28.2" cy="91.2" r="2.4" fill="#0b2113"/><circle cx="44.6" cy="79.4" r="2.0" fill="#0b2113"/><circle cx="31.0" cy="84.5" r="2.7" fill="#0b2113"/><circle cx="15.1" cy="90.9" r="2.6" fill="#0b2113"/><circle cx="34.0" cy="80.8" r="3.9" fill="#0b2113"/><circle cx="19.3" cy="53.7" r="3.8" fill="#0b2113"/><circle cx="28.6" cy="74.3" r="2.0" fill="#0b2113"/><circle cx="21.0" cy="35.4" r="2.2" fill="#0b2113"/><circle cx="28.1" cy="46.8" r="2.8" fill="#0b2113"/><circle cx="39.9" cy="24.8" r="3.0" fill="#0b2113"/><circle cx="24.1" cy="29.7" r="2.6" fill="#0b2113"/><circle cx="24.8" cy="59.1" r="2.1" fill="#0b2113"/><circle cx="14.2" cy="15.6" r="3.4" fill="#0b2113"/><circle cx="42.6" cy="59.6" r="3.4" fill="#0b2113"/><circle cx="8.3" cy="92.5" r="2.9" fill="#0b2113"/><circle cx="34.6" cy="70.5" r="2.4" fill="#0b2113"/><circle cx="32.0" cy="25.1" r="3.9" fill="#0b2113"/><circle cx="49.5" cy="95.8" r="3.9" fill="#0b2113"/><circle cx="32.2" cy="22.6" r="2.1" fill="#0b2113"/><circle cx="2.2" cy="89.2" r="3.0" fill="#0b2113"/><circle cx="21.1" cy="37.9" r="3.8" fill="#0b2113"/><circle cx="28.2" cy="25.0" r="2.6" fill="#0b2113"/><circle cx="45.3" cy="79.6" r="3.9" fill="#0b2113"/><circle cx="29.3" cy="74.2" r="3.4" fill="#0b2113"/><circle cx="5.1" cy="36.1" r="3.9" fill="#0b2113"/><circle cx="7.0" cy="78.0" r="2.1" fill="#0b2113"/><circle cx="-0.1" cy="74.3" r="2.7" fill="#0b2113"/><circle cx="32.1" cy="42.7" r="3.3" fill="#0b2113"/><circle cx="43.9" cy="94.4" r="3.4" fill="#0b2113"/><circle cx="1.1" cy="47.8" r="2.9" fill="#0b2113"/><circle cx="28.4" cy="73.1" r="3.7" fill="#0b2113"/><circle cx="8.4" cy="41.3" r="2.8" fill="#0b2113"/><circle cx="37.6" cy="46.6" r="3.4" fill="#0b2113"/><circle cx="19.1" cy="95.1" r="2.1" fill="#0b2113"/><circle cx="21.0" cy="84.7" r="3.4" fill="#0b2113"/><circle cx="6.1" cy="98.9" r="3.8" fill="#0b2113"/><circle cx="41.4" cy="25.8" r="3.9" fill="#0b2113"/><circle cx="5.0" cy="83.2" r="3.3" fill="#0b2113"/><circle cx="34.7" cy="28.9" r="2.5" fill="#0b2113"/><circle cx="7.1" cy="21.2" r="3.2" fill="#0b2113"/><circle cx="16.1" cy="99.1" r="3.7" fill="#0b2113"/><circle cx="22.3" cy="55.7" r="2.0" fill="#0b2113"/><circle cx="45.9" cy="84.8" r="2.8" fill="#0b2113"/><circle cx="28.5" cy="69.2" r="2.1" fill="#43a054"/><circle cx="18.3" cy="83.9" r="1.6" fill="#1a4f27"/><circle cx="25.3" cy="60.0" r="1.3" fill="#1a4f27"/><circle cx="25.6" cy="18.8" r="1.5" fill="#1a4f27"/><circle cx="19.6" cy="19.2" r="1.8" fill="#359049"/><circle cx="18.3" cy="87.4" r="1.4" fill="#43a054"/><circle cx="38.2" cy="35.0" r="1.3" fill="#43a054"/><circle cx="17.5" cy="112.4" r="2.3" fill="#246a34"/><circle cx="50.1" cy="94.5" r="1.3" fill="#246a34"/><circle cx="31.8" cy="98.8" r="1.3" fill="#246a34"/><circle cx="18.0" cy="58.9" r="2.2" fill="#359049"/><circle cx="20.1" cy="50.0" r="1.5" fill="#359049"/><circle cx="37.7" cy="55.0" r="2.0" fill="#359049"/><circle cx="50" cy="101" r="1.5" fill="#2a7439"/><circle cx="45.6" cy="94.9" r="2.0" fill="#246a34"/><circle cx="43.1" cy="39.4" r="1.1" fill="#359049"/><circle cx="15.2" cy="81.0" r="2.3" fill="#1f6030"/><circle cx="2.5" cy="13.9" r="1.5" fill="#359049"/><circle cx="15.6" cy="88.1" r="2.2" fill="#1a4f27"/><circle cx="34.9" cy="34.9" r="1.4" fill="#2d7b3f"/><circle cx="17.5" cy="65.2" r="2.0" fill="#1c5a2b"/><circle cx="7.8" cy="55.7" r="1.7" fill="#246a34"/><circle cx="16.7" cy="85.3" r="1.3" fill="#2a7439"/><circle cx="46.9" cy="101.6" r="1.3" fill="#359049"/><circle cx="9.6" cy="36.3" r="2.1" fill="#246a34"/><circle cx="23.3" cy="47.2" r="1.1" fill="#1a4f27"/><circle cx="30.7" cy="70.0" r="2.0" fill="#359049"/><circle cx="28.0" cy="49.3" r="1.7" fill="#2d7b3f"/><circle cx="28.5" cy="52.6" r="1.2" fill="#1c5a2b"/><circle cx="53" cy="30" r="1.5" fill="#2d7b3f"/><circle cx="30.7" cy="67.3" r="2.3" fill="#1a4f27"/><circle cx="12.0" cy="27.4" r="1.6" fill="#246a34"/><circle cx="7.3" cy="71.2" r="2.0" fill="#2a7439"/><circle cx="16.7" cy="77.5" r="1.3" fill="#2d7b3f"/><circle cx="27.1" cy="66.8" r="2.2" fill="#1f6030"/><circle cx="18.8" cy="97.5" r="1.3" fill="#1f6030"/><circle cx="17.1" cy="119.6" r="2.1" fill="#1c5a2b"/><circle cx="38.2" cy="47.1" r="1.5" fill="#1c5a2b"/><circle cx="26.7" cy="82.3" r="2.0" fill="#246a34"/><circle cx="35.2" cy="96.4" r="1.8" fill="#1a4f27"/><circle cx="7.1" cy="30.5" r="2.1" fill="#359049"/><circle cx="17.6" cy="83.9" r="2.2" fill="#1a4f27"/><circle cx="16.9" cy="14.6" r="1.8" fill="#2a7439"/><circle cx="30.7" cy="76.4" r="1.4" fill="#359049"/><circle cx="46.6" cy="79.4" r="1.4" fill="#1a4f27"/><circle cx="31.7" cy="68.3" r="2.1" fill="#359049"/><circle cx="31.7" cy="67.1" r="2.1" fill="#2a7439"/><circle cx="15.5" cy="12.5" r="1.8" fill="#359049"/><circle cx="5.3" cy="87.9" r="2.3" fill="#2d7b3f"/><circle cx="8.5" cy="23.2" r="1.5" fill="#359049"/><circle cx="24.0" cy="52.6" r="2.3" fill="#1c5a2b"/><circle cx="43.3" cy="78.7" r="1.4" fill="#1f6030"/><circle cx="11.7" cy="68.5" r="2.0" fill="#2d7b3f"/><circle cx="28.8" cy="21.4" r="2.2" fill="#43a054"/><circle cx="52.7" cy="77.0" r="1.2" fill="#1c5a2b"/><circle cx="20.9" cy="70.6" r="1.3" fill="#43a054"/><circle cx="19.2" cy="113.3" r="2.0" fill="#1c5a2b"/><circle cx="15.3" cy="24.8" r="1.2" fill="#43a054"/><circle cx="30.7" cy="60.1" r="1.2" fill="#1c5a2b"/><circle cx="4.1" cy="14.0" r="2.1" fill="#359049"/><circle cx="12.3" cy="87.5" r="1.8" fill="#1f6030"/><circle cx="7.9" cy="38.8" r="1.6" fill="#359049"/><circle cx="19.3" cy="28.1" r="1.3" fill="#2a7439"/><circle cx="34.4" cy="90.7" r="1.6" fill="#43a054"/><circle cx="24.1" cy="97.7" r="1.6" fill="#1c5a2b"/><circle cx="38.9" cy="95.7" r="2.1" fill="#43a054"/><circle cx="20.3" cy="86.3" r="1.6" fill="#1f6030"/><circle cx="41.7" cy="72.3" r="2.3" fill="#2d7b3f"/><circle cx="26.1" cy="50.8" r="2.2" fill="#2d7b3f"/><circle cx="35.4" cy="36.9" r="1.3" fill="#246a34"/><circle cx="30.1" cy="70.8" r="1.6" fill="#43a054"/><circle cx="11.5" cy="21.5" r="2.0" fill="#2a7439"/><circle cx="-1.8" cy="55.5" r="1.2" fill="#359049"/><circle cx="17.1" cy="49.2" r="1.8" fill="#1f6030"/><circle cx="36.3" cy="23.1" r="1.6" fill="#1f6030"/><circle cx="24.3" cy="116.7" r="1.2" fill="#1c5a2b"/><circle cx="1.4" cy="34.2" r="1.8" fill="#1f6030"/><circle cx="17.4" cy="31.9" r="1.8" fill="#1f6030"/><circle cx="29.5" cy="98.4" r="2.0" fill="#359049"/><circle cx="23.1" cy="31.7" r="1.7" fill="#1c5a2b"/><circle cx="51.0" cy="77.6" r="2.0" fill="#359049"/><circle cx="37.3" cy="76.1" r="1.6" fill="#2d7b3f"/><circle cx="27.9" cy="91.1" r="2.3" fill="#246a34"/><circle cx="15.0" cy="49.8" r="1.1" fill="#2a7439"/><circle cx="26.1" cy="75.4" r="2.0" fill="#2d7b3f"/><circle cx="17.3" cy="35.4" r="2.0" fill="#2d7b3f"/><circle cx="17.3" cy="17.3" r="2.0" fill="#1a4f27"/><circle cx="49.0" cy="82.3" r="2.1" fill="#43a054"/><circle cx="39.8" cy="97.7" r="1.2" fill="#1a4f27"/><circle cx="54" cy="80" r="1.5" fill="#1c5a2b"/><circle cx="35.0" cy="94.3" r="2.2" fill="#2d7b3f"/><circle cx="26.9" cy="66.4" r="1.3" fill="#1f6030"/><circle cx="-1.8" cy="63.2" r="2.0" fill="#43a054"/><circle cx="14.5" cy="108.0" r="2.0" fill="#1a4f27"/><circle cx="33.3" cy="69.2" r="2.3" fill="#1a4f27"/><circle cx="25.2" cy="74.9" r="1.4" fill="#1c5a2b"/><circle cx="31.1" cy="34.2" r="1.8" fill="#2d7b3f"/><circle cx="4.3" cy="25.5" r="1.9" fill="#1c5a2b"/><circle cx="31.3" cy="97.8" r="2.2" fill="#1c5a2b"/><circle cx="2.1" cy="69.8" r="2.2" fill="#43a054"/><circle cx="44.0" cy="45.5" r="1.1" fill="#1c5a2b"/><circle cx="14.7" cy="89.9" r="1.5" fill="#359049"/><circle cx="18.5" cy="55.7" r="1.6" fill="#2a7439"/><circle cx="34.3" cy="56.6" r="1.2" fill="#2d7b3f"/><circle cx="47.4" cy="39.3" r="1.1" fill="#1a4f27"/><circle cx="8.1" cy="52.4" r="2.1" fill="#246a34"/><circle cx="2.0" cy="29.9" r="1.7" fill="#43a054"/><circle cx="34.7" cy="35.5" r="1.6" fill="#43a054"/><circle cx="38.2" cy="37.2" r="2.0" fill="#2a7439"/><circle cx="32.0" cy="49.1" r="1.3" fill="#1a4f27"/><circle cx="6.0" cy="96.5" r="1.3" fill="#1a4f27"/><circle cx="34.4" cy="69.6" r="1.8" fill="#2d7b3f"/><circle cx="40.3" cy="30.9" r="2.3" fill="#2d7b3f"/><circle cx="27.3" cy="89.3" r="1.4" fill="#2a7439"/><circle cx="10.4" cy="17.9" r="1.5" fill="#43a054"/><circle cx="4.0" cy="46.0" r="2.2" fill="#2d7b3f"/><circle cx="50.2" cy="79.4" r="2.1" fill="#359049"/><circle cx="-0.1" cy="22.7" r="1.9" fill="#1a4f27"/><circle cx="31.0" cy="24.2" r="2.1" fill="#2a7439"/><circle cx="23.5" cy="56.1" r="2.1" fill="#1f6030"/><circle cx="26.9" cy="24.3" r="2.2" fill="#2a7439"/><circle cx="25.0" cy="94.6" r="1.8" fill="#2d7b3f"/><circle cx="39.4" cy="41.8" r="1.4" fill="#246a34"/><circle cx="8.9" cy="30.2" r="2.0" fill="#1f6030"/><circle cx="25.8" cy="58.5" r="1.5" fill="#246a34"/><circle cx="-0.5" cy="94.6" r="2.2" fill="#1f6030"/><circle cx="24.8" cy="21.8" r="2.2" fill="#1c5a2b"/><circle cx="2.9" cy="19.2" r="1.7" fill="#1f6030"/><circle cx="22.0" cy="81.9" r="1.9" fill="#1c5a2b"/><circle cx="25.6" cy="42.8" r="2.2" fill="#1a4f27"/><circle cx="-2.0" cy="37.1" r="1.5" fill="#246a34"/><circle cx="-1.3" cy="38.7" r="1.5" fill="#43a054"/><circle cx="12.1" cy="63.5" r="1.4" fill="#1c5a2b"/><circle cx="34.2" cy="45.1" r="1.7" fill="#1c5a2b"/><circle cx="13.5" cy="99.6" r="1.7" fill="#43a054"/><circle cx="14.2" cy="84.2" r="1.7" fill="#2a7439"/><circle cx="31.6" cy="76.2" r="1.7" fill="#359049"/><circle cx="36.8" cy="102.6" r="1.3" fill="#1c5a2b"/><circle cx="47.2" cy="99.3" r="1.6" fill="#1f6030"/><circle cx="45.2" cy="84.4" r="1.5" fill="#2d7b3f"/><circle cx="27.4" cy="108.1" r="1.3" fill="#2a7439"/><circle cx="33.1" cy="27.2" r="1.3" fill="#1c5a2b"/><circle cx="37.6" cy="49.3" r="2.2" fill="#2a7439"/><circle cx="29.2" cy="57.3" r="2.2" fill="#1f6030"/><circle cx="18.2" cy="77.5" r="2.1" fill="#1f6030"/><circle cx="41.1" cy="45.8" r="1.4" fill="#1c5a2b"/><circle cx="10.4" cy="81.1" r="1.3" fill="#43a054"/><circle cx="14.3" cy="75.0" r="1.5" fill="#2a7439"/><circle cx="24.1" cy="103.7" r="1.3" fill="#2a7439"/><circle cx="-0.0" cy="44.7" r="1.8" fill="#2d7b3f"/><circle cx="6.9" cy="72.6" r="1.8" fill="#246a34"/><circle cx="24.9" cy="74.2" r="2.2" fill="#43a054"/><circle cx="38.8" cy="62.0" r="2.2" fill="#2d7b3f"/><circle cx="41.9" cy="45.0" r="1.4" fill="#246a34"/><circle cx="46" cy="104" r="1.5" fill="#1f6030"/><circle cx="32.8" cy="72.2" r="2.2" fill="#2a7439"/><circle cx="12.5" cy="80.2" r="1.6" fill="#43a054"/><circle cx="1.8" cy="25.9" r="1.7" fill="#1c5a2b"/><circle cx="38.7" cy="84.2" r="1.9" fill="#1a4f27"/><circle cx="17.6" cy="55.0" r="2.3" fill="#246a34"/><circle cx="15.7" cy="42.9" r="1.9" fill="#1c5a2b"/><circle cx="1.0" cy="89.2" r="1.2" fill="#359049"/><circle cx="22.1" cy="91.6" r="1.6" fill="#246a34"/><circle cx="53.7" cy="79.2" r="1.3" fill="#2a7439"/><circle cx="14.0" cy="50.8" r="1.7" fill="#2a7439"/><circle cx="7.9" cy="46.7" r="1.5" fill="#1f6030"/><circle cx="39.3" cy="42.3" r="1.8" fill="#2a7439"/><circle cx="14.7" cy="62.5" r="1.6" fill="#1f6030"/><circle cx="47.4" cy="43.5" r="2.2" fill="#1c5a2b"/><circle cx="55" cy="29" r="1.5" fill="#2a7439"/><circle cx="12.9" cy="20.3" r="1.6" fill="#2d7b3f"/><circle cx="20.7" cy="58.5" r="1.5" fill="#1c5a2b"/><circle cx="13.2" cy="65.4" r="1.8" fill="#359049"/><circle cx="46.0" cy="80.2" r="1.1" fill="#1f6030"/><circle cx="12.7" cy="25.6" r="1.9" fill="#1f6030"/><circle cx="6.0" cy="93.9" r="1.3" fill="#1f6030"/><circle cx="21.7" cy="111.0" r="1.3" fill="#359049"/><circle cx="34.2" cy="83.1" r="1.9" fill="#1c5a2b"/><circle cx="23.3" cy="19.6" r="1.4" fill="#1f6030"/><circle cx="41.9" cy="73.3" r="2.0" fill="#1c5a2b"/><circle cx="23.7" cy="99.6" r="1.2" fill="#359049"/><circle cx="18.1" cy="29.7" r="1.3" fill="#246a34"/><circle cx="4.0" cy="88.3" r="2.0" fill="#1a4f27"/><circle cx="30.2" cy="81.1" r="1.9" fill="#1f6030"/><circle cx="57" cy="31.5" r="1.5" fill="#2a7439"/><circle cx="39.7" cy="37.2" r="1.3" fill="#359049"/><circle cx="55.1" cy="78.2" r="2.0" fill="#1a4f27"/></g>
<path d="M185 48.500L232 69.500" stroke="#33261e" stroke-width="3.500" opacity=".6" filter="url(#b2)"/>
<path d="M188.4 50.4L229.6 69L203.7 124L158 106Z" fill="#b1afa6"/>
<g opacity=".75"><circle cx="201.7" cy="70.9" r="0.7" fill="#e3e6e2"/><circle cx="167.4" cy="98.1" r="0.7" fill="#e3e6e2"/><circle cx="205.4" cy="81.8" r="0.7" fill="#e3e6e2"/><circle cx="190.1" cy="65.0" r="1.0" fill="#e3e6e2"/><circle cx="189.8" cy="100.5" r="0.8" fill="#e3e6e2"/><circle cx="193.5" cy="66.2" r="0.9" fill="#e3e6e2"/><circle cx="216.1" cy="77.1" r="0.8" fill="#e3e6e2"/><circle cx="178.9" cy="84.4" r="0.5" fill="#e3e6e2"/><circle cx="220.2" cy="67.3" r="0.9" fill="#e3e6e2"/><circle cx="204.5" cy="96.8" r="0.6" fill="#e3e6e2"/><circle cx="185.4" cy="62.2" r="0.8" fill="#e3e6e2"/><circle cx="213.0" cy="92.8" r="0.6" fill="#e3e6e2"/><circle cx="224.8" cy="66.9" r="0.8" fill="#e3e6e2"/><circle cx="213.6" cy="73.4" r="0.8" fill="#e3e6e2"/><circle cx="191.6" cy="67.8" r="0.8" fill="#e3e6e2"/><circle cx="174.4" cy="85.8" r="0.6" fill="#e3e6e2"/><circle cx="219.0" cy="90.4" r="0.6" fill="#e3e6e2"/><circle cx="206.7" cy="103.3" r="0.6" fill="#e3e6e2"/><circle cx="189.2" cy="60.1" r="0.9" fill="#e3e6e2"/><circle cx="174.7" cy="105.3" r="0.9" fill="#e3e6e2"/><circle cx="184.7" cy="60.6" r="0.9" fill="#e3e6e2"/><circle cx="204.8" cy="77.7" r="0.8" fill="#e3e6e2"/><circle cx="198.2" cy="62.1" r="1.0" fill="#e3e6e2"/><circle cx="177.3" cy="72.8" r="1.0" fill="#e3e6e2"/><circle cx="180.8" cy="112.1" r="0.8" fill="#e3e6e2"/><circle cx="198.4" cy="101.0" r="0.9" fill="#e3e6e2"/><circle cx="168.6" cy="87.3" r="0.6" fill="#e3e6e2"/><circle cx="202.0" cy="96.0" r="0.8" fill="#e3e6e2"/><circle cx="200.1" cy="108.4" r="0.7" fill="#e3e6e2"/><circle cx="179.1" cy="81.1" r="0.8" fill="#e3e6e2"/><circle cx="202.3" cy="75.5" r="0.6" fill="#e3e6e2"/><circle cx="219.0" cy="84.2" r="0.6" fill="#e3e6e2"/><circle cx="213.8" cy="75.9" r="0.7" fill="#e3e6e2"/><circle cx="206.5" cy="91.8" r="0.9" fill="#e3e6e2"/><circle cx="201.1" cy="80.3" r="0.6" fill="#e3e6e2"/><circle cx="194.6" cy="88.5" r="0.7" fill="#e3e6e2"/><circle cx="181.8" cy="77.7" r="0.6" fill="#e3e6e2"/><circle cx="179.7" cy="98.0" r="0.9" fill="#e3e6e2"/><circle cx="175.4" cy="97.2" r="1.0" fill="#e3e6e2"/><circle cx="184.8" cy="105.8" r="0.8" fill="#e3e6e2"/><circle cx="178.9" cy="104.0" r="0.6" fill="#e3e6e2"/><circle cx="209.3" cy="96.6" r="0.5" fill="#e3e6e2"/><circle cx="187.6" cy="99.5" r="0.9" fill="#e3e6e2"/><circle cx="186.8" cy="92.0" r="0.6" fill="#e3e6e2"/><circle cx="184.9" cy="59.5" r="0.9" fill="#e3e6e2"/><circle cx="179.1" cy="85.2" r="0.6" fill="#e3e6e2"/><circle cx="181.5" cy="91.9" r="0.7" fill="#e3e6e2"/><circle cx="205.4" cy="71.7" r="1.0" fill="#e3e6e2"/><circle cx="168.0" cy="95.5" r="1.0" fill="#e3e6e2"/><circle cx="213.8" cy="86.7" r="0.6" fill="#e3e6e2"/><circle cx="204.3" cy="98.8" r="1.0" fill="#e3e6e2"/><circle cx="222.0" cy="65.8" r="0.8" fill="#e3e6e2"/><circle cx="200.5" cy="68.7" r="1.0" fill="#e3e6e2"/><circle cx="207.2" cy="81.9" r="0.8" fill="#e3e6e2"/><circle cx="187.2" cy="112.2" r="0.6" fill="#e3e6e2"/><circle cx="188.3" cy="84.2" r="0.7" fill="#e3e6e2"/><circle cx="190.2" cy="67.1" r="0.7" fill="#e3e6e2"/><circle cx="212.7" cy="92.6" r="0.8" fill="#e3e6e2"/><circle cx="188.9" cy="113.8" r="0.6" fill="#e3e6e2"/><circle cx="195.1" cy="99.6" r="0.9" fill="#e3e6e2"/><circle cx="190.8" cy="81.2" r="1.0" fill="#e3e6e2"/><circle cx="180.9" cy="114.6" r="0.8" fill="#e3e6e2"/><circle cx="203.5" cy="83.1" r="1.0" fill="#e3e6e2"/><circle cx="192.5" cy="81.1" r="0.6" fill="#e3e6e2"/><circle cx="214.6" cy="91.3" r="0.6" fill="#e3e6e2"/><circle cx="188.9" cy="64.0" r="0.7" fill="#e3e6e2"/><circle cx="177.8" cy="81.9" r="0.9" fill="#e3e6e2"/><circle cx="200.3" cy="120.7" r="0.9" fill="#e3e6e2"/><circle cx="223.8" cy="73.4" r="0.7" fill="#e3e6e2"/><circle cx="219.5" cy="86.3" r="0.8" fill="#e3e6e2"/><circle cx="191.0" cy="83.9" r="0.9" fill="#e3e6e2"/><circle cx="193.7" cy="102.1" r="0.6" fill="#e3e6e2"/><circle cx="191.8" cy="54.3" r="0.8" fill="#e3e6e2"/><circle cx="197.8" cy="79.2" r="0.9" fill="#e3e6e2"/><circle cx="193.3" cy="81.8" r="0.6" fill="#e3e6e2"/><circle cx="172.6" cy="95.1" r="0.7" fill="#e3e6e2"/><circle cx="196.3" cy="57.9" r="0.8" fill="#e3e6e2"/><circle cx="180.7" cy="69.8" r="0.7" fill="#e3e6e2"/><circle cx="192.3" cy="52.9" r="1.0" fill="#e3e6e2"/><circle cx="173.5" cy="104.1" r="0.5" fill="#e3e6e2"/><circle cx="184.2" cy="81.6" r="0.6" fill="#e3e6e2"/><circle cx="207.3" cy="75.9" r="0.9" fill="#e3e6e2"/><circle cx="207.0" cy="115.9" r="0.6" fill="#e3e6e2"/><circle cx="189.3" cy="52.8" r="0.9" fill="#e3e6e2"/><circle cx="205.4" cy="97.7" r="0.7" fill="#e3e6e2"/><circle cx="183.0" cy="106.7" r="0.8" fill="#e3e6e2"/><circle cx="176.9" cy="94.5" r="0.6" fill="#e3e6e2"/><circle cx="207.7" cy="88.1" r="0.8" fill="#e3e6e2"/><circle cx="164.5" cy="95.9" r="0.9" fill="#e3e6e2"/><circle cx="185.1" cy="64.3" r="0.8" fill="#e3e6e2"/><circle cx="198.6" cy="55.5" r="0.7" fill="#e3e6e2"/><circle cx="207.1" cy="107.9" r="0.8" fill="#e3e6e2"/><circle cx="198.8" cy="55.8" r="1.0" fill="#e3e6e2"/><circle cx="187.4" cy="77.8" r="0.9" fill="#e3e6e2"/><circle cx="190.1" cy="79.0" r="0.5" fill="#e3e6e2"/><circle cx="200.4" cy="112.6" r="0.6" fill="#e3e6e2"/><circle cx="180.2" cy="100.8" r="0.7" fill="#e3e6e2"/><circle cx="210.3" cy="91.1" r="0.8" fill="#e3e6e2"/><circle cx="224.2" cy="67.8" r="0.7" fill="#e3e6e2"/><circle cx="189.8" cy="99.6" r="0.8" fill="#e3e6e2"/><circle cx="199.5" cy="80.5" r="0.9" fill="#e3e6e2"/><circle cx="191.6" cy="93.0" r="0.9" fill="#e3e6e2"/><circle cx="189.1" cy="91.3" r="0.5" fill="#e3e6e2"/><circle cx="186.5" cy="88.8" r="1.0" fill="#e3e6e2"/><circle cx="180.5" cy="104.6" r="0.9" fill="#e3e6e2"/><circle cx="177.4" cy="83.9" r="0.7" fill="#e3e6e2"/><circle cx="197.6" cy="106.1" r="0.7" fill="#e3e6e2"/><circle cx="179.2" cy="84.0" r="0.7" fill="#e3e6e2"/><circle cx="206.4" cy="59.9" r="0.8" fill="#e3e6e2"/><circle cx="209.3" cy="91.1" r="0.5" fill="#e3e6e2"/><circle cx="206.7" cy="71.2" r="0.8" fill="#e3e6e2"/><circle cx="175.0" cy="97.3" r="0.6" fill="#e3e6e2"/><circle cx="207.6" cy="92.3" r="0.7" fill="#e3e6e2"/><circle cx="198.7" cy="94.2" r="0.7" fill="#e3e6e2"/><circle cx="183.9" cy="104.9" r="0.7" fill="#e3e6e2"/><circle cx="194.2" cy="58.7" r="0.9" fill="#e3e6e2"/><circle cx="201.4" cy="116.9" r="0.8" fill="#e3e6e2"/><circle cx="210.6" cy="65.1" r="0.6" fill="#e3e6e2"/><circle cx="210.5" cy="70.6" r="0.7" fill="#e3e6e2"/><circle cx="177.0" cy="106.9" r="0.6" fill="#e3e6e2"/><circle cx="225.4" cy="67.6" r="0.6" fill="#e3e6e2"/><circle cx="193.3" cy="87.1" r="0.5" fill="#e3e6e2"/><circle cx="187.1" cy="110.8" r="0.5" fill="#e3e6e2"/><circle cx="186.4" cy="109.9" r="0.8" fill="#e3e6e2"/><circle cx="185.8" cy="95.5" r="0.8" fill="#e3e6e2"/><circle cx="194.0" cy="67.2" r="0.6" fill="#e3e6e2"/><circle cx="174.4" cy="99.3" r="0.7" fill="#e3e6e2"/><circle cx="176.4" cy="100.5" r="0.8" fill="#e3e6e2"/><circle cx="188.6" cy="103.9" r="0.5" fill="#e3e6e2"/><circle cx="227.5" cy="73.2" r="0.8" fill="#e3e6e2"/><circle cx="203.6" cy="101.3" r="0.6" fill="#e3e6e2"/><circle cx="218.2" cy="87.1" r="0.8" fill="#e3e6e2"/><circle cx="192.6" cy="94.4" r="1.0" fill="#e3e6e2"/><circle cx="201.7" cy="116.9" r="0.9" fill="#e3e6e2"/><circle cx="187.9" cy="73.1" r="0.9" fill="#e3e6e2"/><circle cx="190.2" cy="114.1" r="0.7" fill="#e3e6e2"/><circle cx="193.5" cy="118.9" r="0.8" fill="#e3e6e2"/><circle cx="199.3" cy="95.1" r="0.7" fill="#e3e6e2"/><circle cx="202.1" cy="61.3" r="0.8" fill="#e3e6e2"/><circle cx="213.6" cy="96.6" r="0.9" fill="#e3e6e2"/><circle cx="164.9" cy="99.8" r="0.7" fill="#e3e6e2"/><circle cx="180.7" cy="114.6" r="0.7" fill="#e3e6e2"/><circle cx="172.3" cy="102.9" r="0.8" fill="#e3e6e2"/><circle cx="176.1" cy="86.1" r="0.6" fill="#e3e6e2"/><circle cx="205.6" cy="74.6" r="0.5" fill="#e3e6e2"/><circle cx="199.4" cy="83.8" r="0.9" fill="#e3e6e2"/><circle cx="184.8" cy="75.5" r="0.8" fill="#e3e6e2"/><circle cx="187.2" cy="97.7" r="0.9" fill="#e3e6e2"/><circle cx="183.0" cy="73.8" r="0.7" fill="#e3e6e2"/><circle cx="189.4" cy="117.7" r="0.9" fill="#e3e6e2"/><circle cx="212.3" cy="74.4" r="0.7" fill="#e3e6e2"/><circle cx="202.4" cy="62.8" r="0.6" fill="#e3e6e2"/><circle cx="190.1" cy="76.4" r="0.6" fill="#e3e6e2"/><circle cx="193.8" cy="69.5" r="0.6" fill="#e3e6e2"/><circle cx="207.7" cy="78.7" r="0.9" fill="#e3e6e2"/><circle cx="194.1" cy="65.1" r="1.0" fill="#e3e6e2"/><circle cx="193.8" cy="60.0" r="0.7" fill="#e3e6e2"/><circle cx="188.3" cy="76.7" r="0.7" fill="#e3e6e2"/><circle cx="181.7" cy="79.0" r="0.5" fill="#e3e6e2"/><circle cx="200.6" cy="83.0" r="0.7" fill="#e3e6e2"/><circle cx="215.6" cy="95.3" r="0.9" fill="#e3e6e2"/><circle cx="166.8" cy="90.9" r="0.5" fill="#e3e6e2"/><circle cx="163.6" cy="103.8" r="0.7" fill="#e3e6e2"/><circle cx="212.5" cy="71.8" r="0.8" fill="#e3e6e2"/><circle cx="212.6" cy="77.7" r="0.8" fill="#e3e6e2"/><circle cx="214.7" cy="84.6" r="0.7" fill="#e3e6e2"/><circle cx="168.6" cy="92.7" r="0.8" fill="#e3e6e2"/><circle cx="204.3" cy="112.7" r="0.8" fill="#e3e6e2"/><circle cx="198.4" cy="110.3" r="0.9" fill="#e3e6e2"/><circle cx="206.7" cy="100.4" r="0.8" fill="#e3e6e2"/><circle cx="197.2" cy="70.3" r="0.7" fill="#e3e6e2"/><circle cx="206.9" cy="83.9" r="0.8" fill="#e3e6e2"/><circle cx="194.7" cy="115.1" r="0.8" fill="#e3e6e2"/><circle cx="213.7" cy="94.2" r="0.8" fill="#e3e6e2"/><circle cx="211.9" cy="71.8" r="0.7" fill="#e3e6e2"/><circle cx="190.3" cy="98.0" r="0.7" fill="#e3e6e2"/><circle cx="180.0" cy="93.8" r="0.5" fill="#e3e6e2"/><circle cx="167.9" cy="107.4" r="0.8" fill="#e3e6e2"/><circle cx="185.7" cy="108.5" r="0.9" fill="#e3e6e2"/><circle cx="183.2" cy="105.7" r="0.6" fill="#e3e6e2"/><circle cx="202.5" cy="66.0" r="0.6" fill="#e3e6e2"/><circle cx="191.4" cy="58.9" r="1.0" fill="#e3e6e2"/><circle cx="178.9" cy="114.2" r="0.8" fill="#e3e6e2"/><circle cx="171.4" cy="82.2" r="0.9" fill="#e3e6e2"/><circle cx="195.2" cy="75.5" r="0.6" fill="#e3e6e2"/><circle cx="179.6" cy="97.9" r="0.7" fill="#e3e6e2"/><circle cx="197.3" cy="79.3" r="0.9" fill="#e3e6e2"/><circle cx="181.9" cy="100.9" r="0.7" fill="#e3e6e2"/><circle cx="228.3" cy="71.7" r="0.9" fill="#e3e6e2"/><circle cx="209.3" cy="98.6" r="0.9" fill="#e3e6e2"/><circle cx="211.6" cy="67.4" r="1.0" fill="#e3e6e2"/><circle cx="187.7" cy="96.1" r="0.9" fill="#e3e6e2"/><circle cx="202.0" cy="72.4" r="0.9" fill="#e3e6e2"/><circle cx="197.2" cy="104.4" r="0.8" fill="#e3e6e2"/><circle cx="203.4" cy="121.9" r="0.9" fill="#e3e6e2"/><circle cx="187.2" cy="85.0" r="0.8" fill="#e3e6e2"/><circle cx="208.9" cy="85.3" r="0.9" fill="#e3e6e2"/><circle cx="187.4" cy="96.9" r="0.6" fill="#e3e6e2"/><circle cx="207.0" cy="105.7" r="0.6" fill="#e3e6e2"/><circle cx="173.3" cy="86.1" r="0.7" fill="#e3e6e2"/><circle cx="223.5" cy="69.3" r="0.9" fill="#e3e6e2"/><circle cx="213.0" cy="80.9" r="0.5" fill="#e3e6e2"/><circle cx="217.0" cy="84.5" r="1.0" fill="#e3e6e2"/><circle cx="182.0" cy="112.6" r="0.9" fill="#e3e6e2"/><circle cx="207.0" cy="85.1" r="1.0" fill="#e3e6e2"/><circle cx="204.8" cy="65.2" r="0.9" fill="#e3e6e2"/><circle cx="189.3" cy="65.3" r="0.7" fill="#e3e6e2"/><circle cx="184.2" cy="107.8" r="0.7" fill="#e3e6e2"/><circle cx="224.1" cy="70.5" r="0.6" fill="#e3e6e2"/><circle cx="200.4" cy="100.8" r="1.0" fill="#e3e6e2"/><circle cx="190.8" cy="59.7" r="0.8" fill="#e3e6e2"/><circle cx="209.9" cy="106.8" r="0.9" fill="#e3e6e2"/><circle cx="220.4" cy="83.8" r="0.5" fill="#e3e6e2"/><circle cx="215.1" cy="66.3" r="0.6" fill="#e3e6e2"/><circle cx="199.7" cy="57.8" r="0.8" fill="#e3e6e2"/><circle cx="173.6" cy="95.5" r="1.0" fill="#e3e6e2"/><circle cx="203.1" cy="95.1" r="0.8" fill="#e3e6e2"/><circle cx="200.6" cy="64.3" r="0.8" fill="#e3e6e2"/><circle cx="210.2" cy="77.6" r="0.9" fill="#e3e6e2"/><circle cx="213.8" cy="87.7" r="0.9" fill="#e3e6e2"/><circle cx="190.7" cy="84.3" r="0.9" fill="#e3e6e2"/><circle cx="201.4" cy="121.7" r="0.9" fill="#e3e6e2"/><circle cx="208.7" cy="84.8" r="0.6" fill="#e3e6e2"/><circle cx="201.9" cy="67.3" r="0.7" fill="#e3e6e2"/><circle cx="183.9" cy="66.2" r="0.6" fill="#e3e6e2"/><circle cx="206.6" cy="97.3" r="0.9" fill="#e3e6e2"/><circle cx="188.1" cy="107.7" r="0.7" fill="#e3e6e2"/><circle cx="207.5" cy="59.5" r="0.7" fill="#e3e6e2"/><circle cx="166.9" cy="108.0" r="0.7" fill="#e3e6e2"/><circle cx="202.5" cy="66.3" r="0.7" fill="#e3e6e2"/><circle cx="184.3" cy="107.8" r="0.9" fill="#e3e6e2"/><circle cx="187.2" cy="81.6" r="1.0" fill="#e3e6e2"/><circle cx="189.9" cy="114.8" r="0.8" fill="#e3e6e2"/><circle cx="168.3" cy="109.4" r="0.9" fill="#e3e6e2"/><circle cx="205.6" cy="115.1" r="1.0" fill="#e3e6e2"/><circle cx="218.5" cy="83.3" r="0.5" fill="#e3e6e2"/><circle cx="203.2" cy="119.0" r="0.8" fill="#e3e6e2"/><circle cx="223.1" cy="75.5" r="0.9" fill="#e3e6e2"/><circle cx="188.8" cy="115.3" r="0.5" fill="#e3e6e2"/><circle cx="183.7" cy="106.9" r="0.8" fill="#e3e6e2"/><circle cx="190.6" cy="81.2" r="0.6" fill="#e3e6e2"/><circle cx="198.2" cy="96.3" r="0.8" fill="#e3e6e2"/><circle cx="216.5" cy="95.8" r="0.7" fill="#e3e6e2"/><circle cx="188.1" cy="59.1" r="0.8" fill="#e3e6e2"/><circle cx="204.6" cy="75.5" r="0.7" fill="#e3e6e2"/><circle cx="203.8" cy="122.8" r="0.6" fill="#e3e6e2"/><circle cx="195.7" cy="79.2" r="1.0" fill="#e3e6e2"/><circle cx="213.9" cy="95.7" r="0.7" fill="#e3e6e2"/><circle cx="197.5" cy="95.9" r="0.9" fill="#e3e6e2"/><circle cx="191.5" cy="73.7" r="0.5" fill="#e3e6e2"/><circle cx="198.9" cy="64.6" r="1.0" fill="#e3e6e2"/><circle cx="208.6" cy="104.6" r="1.0" fill="#e3e6e2"/><circle cx="205.4" cy="93.8" r="0.9" fill="#e3e6e2"/><circle cx="198.1" cy="80.3" r="1.0" fill="#e3e6e2"/><circle cx="187.2" cy="76.0" r="0.7" fill="#e3e6e2"/><circle cx="200.2" cy="85.0" r="0.7" fill="#e3e6e2"/><circle cx="205.5" cy="72.5" r="0.9" fill="#e3e6e2"/><circle cx="217.7" cy="83.6" r="0.5" fill="#e3e6e2"/><circle cx="172.5" cy="108.4" r="1.0" fill="#e3e6e2"/><circle cx="173.8" cy="86.5" r="0.8" fill="#e3e6e2"/><circle cx="206.1" cy="89.7" r="0.6" fill="#e3e6e2"/><circle cx="193.1" cy="104.8" r="0.7" fill="#e3e6e2"/><circle cx="196.9" cy="62.6" r="0.5" fill="#e3e6e2"/><circle cx="183.2" cy="80.8" r="0.9" fill="#e3e6e2"/><circle cx="196.8" cy="93.9" r="0.7" fill="#e3e6e2"/><circle cx="184.2" cy="97.8" r="0.8" fill="#e3e6e2"/><circle cx="201.6" cy="64.3" r="0.5" fill="#e3e6e2"/><circle cx="196.0" cy="82.5" r="0.6" fill="#e3e6e2"/><circle cx="206.1" cy="73.1" r="0.6" fill="#e3e6e2"/><circle cx="205.8" cy="95.8" r="1.0" fill="#e3e6e2"/><circle cx="174.4" cy="77.3" r="0.9" fill="#e3e6e2"/><circle cx="173.1" cy="86.8" r="0.5" fill="#e3e6e2"/><circle cx="200.4" cy="85.7" r="0.7" fill="#e3e6e2"/><circle cx="172.5" cy="93.8" r="0.7" fill="#e3e6e2"/><circle cx="189.9" cy="78.3" r="0.9" fill="#e3e6e2"/><circle cx="198.8" cy="88.6" r="0.9" fill="#e3e6e2"/><circle cx="178.5" cy="108.0" r="0.7" fill="#e3e6e2"/><circle cx="209.0" cy="69.4" r="0.7" fill="#e3e6e2"/><circle cx="227.0" cy="70.3" r="0.8" fill="#e3e6e2"/><circle cx="186.3" cy="97.0" r="1.0" fill="#e3e6e2"/><circle cx="209.6" cy="72.3" r="0.8" fill="#e3e6e2"/><circle cx="182.4" cy="110.1" r="0.6" fill="#e3e6e2"/><circle cx="198.5" cy="93.8" r="0.5" fill="#e3e6e2"/><circle cx="178.6" cy="87.2" r="0.8" fill="#e3e6e2"/><circle cx="184.9" cy="69.6" r="0.9" fill="#e3e6e2"/><circle cx="208.0" cy="112.0" r="0.8" fill="#e3e6e2"/><circle cx="197.4" cy="88.8" r="0.6" fill="#e3e6e2"/><circle cx="216.8" cy="89.9" r="0.7" fill="#e3e6e2"/><circle cx="190.5" cy="70.9" r="0.7" fill="#e3e6e2"/><circle cx="211.0" cy="70.5" r="0.6" fill="#e3e6e2"/><circle cx="192.7" cy="86.7" r="0.8" fill="#e3e6e2"/><circle cx="193.7" cy="81.9" r="0.6" fill="#e3e6e2"/><circle cx="197.5" cy="110.9" r="0.7" fill="#e3e6e2"/><circle cx="170.1" cy="84.4" r="0.7" fill="#e3e6e2"/><circle cx="205.9" cy="89.8" r="0.6" fill="#e3e6e2"/><circle cx="217.7" cy="93.9" r="1.0" fill="#e3e6e2"/><circle cx="199.2" cy="63.0" r="0.6" fill="#e3e6e2"/><circle cx="169.6" cy="97.6" r="0.9" fill="#e3e6e2"/><circle cx="197.7" cy="74.5" r="0.5" fill="#e3e6e2"/><circle cx="185.6" cy="103.4" r="0.5" fill="#e3e6e2"/></g>
<circle cx="202.1" cy="74.7" r="9.8" fill="#b9a896"/>
</svg><span class="t" style="font-family:&quot;Liberation Sans&quot;;left:48.97px;top:55.59px;font-size:19.5px;font-weight:normal;color:#fff;text-shadow:0 0 2px rgba(60,50,40,.35);transform:scaleX(1.1008)">Introduction to</span><span class="t" style="font-family:&quot;Liberation Sans&quot;;left:49.27px;top:78.99px;font-size:19.5px;font-weight:normal;color:#fff;text-shadow:0 0 2px rgba(60,50,40,.35);transform:scaleX(1.0464)">Literary Theory</span><span class="t" style="font-family:&quot;Liberation Sans&quot;;left:167.18px;top:105.08px;font-size:10.3px;font-weight:bold;color:#1d6480;transform:scaleX(0.9987)">EN 1301</span></div><svg style="left:0;top:0" width="48" height="48" viewBox="0 0 48 48"><polygon points="22.00,12.55 31.87,18.25 31.87,29.65 22.00,35.35 12.13,29.65 12.13,18.25" fill="#fff" stroke="#15864a" stroke-width="1.6" stroke-linejoin="round"/><g transform="translate(22.0 23.95)" fill="#15864a"><circle cx="0.1" cy="-5.6" r="1.7"/><path d="M-5.7 -3.4Q0 -2.5 5.8 -3.4" fill="none" stroke="#15864a" stroke-width="1.6" stroke-linecap="round"/><path d="M-1.9 -2.9H2L2.1 2L3.4 6.6L1.9 7.1L0.05 2.8L-1.8 7.1L-3.3 6.6L-2 2Z"/></g></svg></div><svg style="left:12px;top:144px" width="24" height="32" viewBox="0 0 24 32"><path fill="#e4672a" d="M1.4 0H14V8.6a1.4 1.4 0 0 0 1.4 1.4H24V30.5a1.5 1.5 0 0 1-1.5 1.5H1.5A1.5 1.5 0 0 1 0 30.5V1.4A1.4 1.4 0 0 1 1.4 0ZM16 0H16.4L24 7.6V8H16Z"/><path fill="#fff" fill-rule="evenodd" d="M6.8 13.8H12.6a5 5 0 0 1 0 10H9.9V28H6.8ZM9.9 16.8V20.9H12.3a2.05 2.05 0 0 0 0-4.1Z"/></svg></div>
<div class="card" style="left:816px;top:373px"><div class="top"><div class="sh"></div><div class="th"><span class="t" style="left:83.11px;top:28.92px;font-size:5.6px;font-weight:normal;color:#111;transform:scaleX(0.8399)">Philosophy Research Assignment</span><span class="t" style="left:27.86px;top:40.24px;font-size:3.8px;font-weight:normal;color:#1a1a1a;transform:scaleX(1.0400)">I. The Problem of Knowledge (the logical problem). However different the different sciences may be with</span><span class="t" style="left:27.86px;top:45.90px;font-size:3.8px;font-weight:normal;color:#1a1a1a;transform:scaleX(1.0444)">regard to subject-matter and method, yet they all work by means of human thought. Every time that</span><span class="t" style="left:27.86px;top:51.39px;font-size:3.8px;font-weight:normal;color:#1a1a1a;transform:scaleX(1.0377)">they form a concept, pronounce a judgment, or draw a conclusion, they presuppose the general forms</span><span class="t" style="left:27.86px;top:57.05px;font-size:3.8px;font-weight:normal;color:#1a1a1a;transform:scaleX(1.0321)">and principles of thought. Hence the possibility of a special discipline which shall investigate the forms</span><span class="t" style="left:27.86px;top:62.55px;font-size:3.8px;font-weight:normal;color:#1a1a1a;transform:scaleX(1.0319)">under which thought works, and the principles which it must, from its nature, underlie it, whatever be the</span><span class="t" style="left:27.86px;top:68.21px;font-size:3.8px;font-weight:normal;color:#1a1a1a;transform:scaleX(1.0315)">subject with which it is concerned. This discipline, i.e. Formal logic, treats, however, of a part only of the</span><span class="t" style="left:27.86px;top:73.71px;font-size:3.8px;font-weight:normal;color:#1a1a1a;transform:scaleX(1.0422)">problem of knowledge. These forms and principles do not lead out beyond thought itself, but only</span><span class="t" style="left:27.86px;top:79.37px;font-size:3.8px;font-weight:normal;color:#1a1a1a;transform:scaleX(1.0443)">enable it to be in harmony with itself,—to be consistent. Every time that they are applied to given</span><span class="t" style="left:27.86px;top:85.03px;font-size:3.8px;font-weight:normal;color:#1a1a1a;transform:scaleX(1.0401)">phenomena, which our thought has not itself constructed, but must take as they come, the question</span><span class="t" style="left:27.86px;top:90.53px;font-size:3.8px;font-weight:normal;color:#1a1a1a;transform:scaleX(1.0397)">arises : with what right does this application take place ? —with what right do we assume that not only</span><span class="t" style="left:27.86px;top:96.19px;font-size:3.8px;font-weight:normal;color:#1a1a1a;transform:scaleX(1.0350)">our thought, but also existence itself, as it exercises itself in the given phenomena, is consistent, is in</span><span class="t" style="left:27.86px;top:101.69px;font-size:3.8px;font-weight:normal;color:#1a1a1a;transform:scaleX(1.0323)">harmony with itself? Thus arises the possibility of a discipline which shall investigate the conditions for a</span><span class="t" style="left:27.86px;top:107.34px;font-size:3.8px;font-weight:normal;color:#1a1a1a;transform:scaleX(1.0302)">knowledge of existence, and the limits of such a knowledge. This discipline is the theory of knowledge.</span></div><svg style="left:0;top:0" width="48" height="48" viewBox="0 0 48 48"><polygon points="22.00,12.55 31.87,18.25 31.87,29.65 22.00,35.35 12.13,29.65 12.13,18.25" fill="#fff" stroke="#15864a" stroke-width="1.6" stroke-linejoin="round"/><g transform="translate(22.0 23.95)" fill="#15864a"><circle cx="0.1" cy="-5.6" r="1.7"/><path d="M-5.7 -3.4Q0 -2.5 5.8 -3.4" fill="none" stroke="#15864a" stroke-width="1.6" stroke-linecap="round"/><path d="M-1.9 -2.9H2L2.1 2L3.4 6.6L1.9 7.1L0.05 2.8L-1.8 7.1L-3.3 6.6L-2 2Z"/></g></svg></div><svg style="left:12px;top:144px" width="24" height="32" viewBox="0 0 24 32"><path fill="#2b5fd9" d="M1.4 0H14V8.6a1.4 1.4 0 0 0 1.4 1.4H24V30.5a1.5 1.5 0 0 1-1.5 1.5H1.5A1.5 1.5 0 0 1 0 30.5V1.4A1.4 1.4 0 0 1 1.4 0ZM16 0H16.4L24 7.6V8H16Z"/><path fill="#fff" d="M4 16H6.9L8.8 24.4L10.8 16H13L15 24.4L16.9 16H19.8L16.6 28H13.6L11.9 20.8L10.2 28H7.2Z"/></svg></div>
<div class="card" style="left:1166px;top:373px"><div class="top"><div class="sh"></div><div class="th"><span class="t" style="left:92.81px;top:28.92px;font-size:5.6px;font-weight:normal;color:#111;transform:scaleX(0.8581)">Literary Theory Essay 1</span><span class="t" style="left:27.86px;top:40.24px;font-size:3.8px;font-weight:normal;color:#1a1a1a;transform:scaleX(1.0400)">I. The Problem of Knowledge (the logical problem). However different the different sciences may be with</span><span class="t" style="left:27.86px;top:45.90px;font-size:3.8px;font-weight:normal;color:#1a1a1a;transform:scaleX(1.0444)">regard to subject-matter and method, yet they all work by means of human thought. Every time that</span><span class="t" style="left:27.86px;top:51.39px;font-size:3.8px;font-weight:normal;color:#1a1a1a;transform:scaleX(1.0377)">they form a concept, pronounce a judgment, or draw a conclusion, they presuppose the general forms</span><span class="t" style="left:27.86px;top:57.05px;font-size:3.8px;font-weight:normal;color:#1a1a1a;transform:scaleX(1.0321)">and principles of thought. Hence the possibility of a special discipline which shall investigate the forms</span><span class="t" style="left:27.86px;top:62.55px;font-size:3.8px;font-weight:normal;color:#1a1a1a;transform:scaleX(1.0319)">under which thought works, and the principles which it must, from its nature, underlie it, whatever be the</span><span class="t" style="left:27.86px;top:68.21px;font-size:3.8px;font-weight:normal;color:#1a1a1a;transform:scaleX(1.0315)">subject with which it is concerned. This discipline, i.e. Formal logic, treats, however, of a part only of the</span><span class="t" style="left:27.86px;top:73.71px;font-size:3.8px;font-weight:normal;color:#1a1a1a;transform:scaleX(1.0422)">problem of knowledge. These forms and principles do not lead out beyond thought itself, but only</span><span class="t" style="left:27.86px;top:79.37px;font-size:3.8px;font-weight:normal;color:#1a1a1a;transform:scaleX(1.0443)">enable it to be in harmony with itself,—to be consistent. Every time that they are applied to given</span><span class="t" style="left:27.86px;top:85.03px;font-size:3.8px;font-weight:normal;color:#1a1a1a;transform:scaleX(1.0401)">phenomena, which our thought has not itself constructed, but must take as they come, the question</span><span class="t" style="left:27.86px;top:90.53px;font-size:3.8px;font-weight:normal;color:#1a1a1a;transform:scaleX(1.0397)">arises : with what right does this application take place ? —with what right do we assume that not only</span><span class="t" style="left:27.86px;top:96.19px;font-size:3.8px;font-weight:normal;color:#1a1a1a;transform:scaleX(1.0350)">our thought, but also existence itself, as it exercises itself in the given phenomena, is consistent, is in</span><span class="t" style="left:27.86px;top:101.69px;font-size:3.8px;font-weight:normal;color:#1a1a1a;transform:scaleX(1.0323)">harmony with itself? Thus arises the possibility of a discipline which shall investigate the conditions for a</span><span class="t" style="left:27.86px;top:107.34px;font-size:3.8px;font-weight:normal;color:#1a1a1a;transform:scaleX(1.0302)">knowledge of existence, and the limits of such a knowledge. This discipline is the theory of knowledge.</span></div><svg style="left:0;top:0" width="48" height="48" viewBox="0 0 48 48"><polygon points="22.00,12.55 31.87,18.25 31.87,29.65 22.00,35.35 12.13,29.65 12.13,18.25" fill="#fff" stroke="#15864a" stroke-width="1.6" stroke-linejoin="round"/><g transform="translate(22.0 23.95)" fill="#15864a"><circle cx="0.1" cy="-5.6" r="1.7"/><path d="M-5.7 -3.4Q0 -2.5 5.8 -3.4" fill="none" stroke="#15864a" stroke-width="1.6" stroke-linecap="round"/><path d="M-1.9 -2.9H2L2.1 2L3.4 6.6L1.9 7.1L0.05 2.8L-1.8 7.1L-3.3 6.6L-2 2Z"/></g></svg></div><svg style="left:12px;top:144px" width="24" height="32" viewBox="0 0 24 32"><path fill="#2b5fd9" d="M1.4 0H14V8.6a1.4 1.4 0 0 0 1.4 1.4H24V30.5a1.5 1.5 0 0 1-1.5 1.5H1.5A1.5 1.5 0 0 1 0 30.5V1.4A1.4 1.4 0 0 1 1.4 0ZM16 0H16.4L24 7.6V8H16Z"/><path fill="#fff" d="M4 16H6.9L8.8 24.4L10.8 16H13L15 24.4L16.9 16H19.8L16.6 28H13.6L11.9 20.8L10.2 28H7.2Z"/></svg></div>
<div class="card" style="left:116px;top:587px"><div class="top"><div class="sh"></div><div class="th"><span class="t" style="left:28.17px;top:29.02px;font-size:5.4px;font-weight:normal;color:#111;transform:scaleX(0.8139)">A BRIEF HISTORY OF MODERN PHILOSOPHY</span><span class="t" style="left:28.19px;top:40.23px;font-size:3.7px;font-weight:normal;color:#222;transform:scaleX(0.9559)">INTRODUCTION</span><span class="t" style="left:27.86px;top:48.97px;font-size:3.8px;font-weight:normal;color:#1a1a1a;transform:scaleX(1.0395)">The appearance of a new representation of an important period in the History of Philosophy will</span><span class="t" style="left:27.86px;top:54.63px;font-size:3.8px;font-weight:normal;color:#1a1a1a;transform:scaleX(1.0345)">naturally give rise to the question as to what view of philosophy is regarded by the author as</span><span class="t" style="left:27.84px;top:60.13px;font-size:3.8px;font-weight:normal;color:#1a1a1a;transform:scaleX(1.1442)">fundamental, and what is the significance and value which he ascribes to its history. To which I</span><span class="t" style="left:27.86px;top:65.79px;font-size:3.8px;font-weight:normal;color:#1a1a1a;transform:scaleX(1.0449)">answer that the whole aim of the studies of which the publication of this book denotes the provisional</span><span class="t" style="left:27.86px;top:71.28px;font-size:3.8px;font-weight:normal;color:#1a1a1a;transform:scaleX(1.0278)">conclusion has been to shed light on the question as to what philosophy really is. As we learn to know a</span><span class="t" style="left:27.86px;top:76.94px;font-size:3.8px;font-weight:normal;color:#1a1a1a;transform:scaleX(1.0331)">man from his biography, so also we must be able to learn to know a science from its history. And it is the</span><span class="t" style="left:27.86px;top:82.44px;font-size:3.8px;font-weight:normal;color:#1a1a1a;transform:scaleX(1.0392)">more natural that we should adopt this path, since experience is continually showing us that, within the</span><span class="t" style="left:27.86px;top:87.94px;font-size:3.8px;font-weight:normal;color:#1a1a1a;transform:scaleX(1.0240)">sphere of philosophy, contending views are advanced, each one of which claims to be valid, so that</span><span class="t" style="left:27.86px;top:93.60px;font-size:3.8px;font-weight:normal;color:#1a1a1a;transform:scaleX(1.0306)">there is no one exposition of philosophy to which we can point as developing an exhaustive conception</span><span class="t" style="left:27.86px;top:99.10px;font-size:3.8px;font-weight:normal;color:#1a1a1a;transform:scaleX(1.0477)">of it. It is natural, therefore, that we should here, as within the sphere of religion, employ the</span><span class="t" style="left:27.86px;top:104.76px;font-size:3.8px;font-weight:normal;color:#1a1a1a;transform:scaleX(1.0386)">comparative method. The history of philosophy treats of the attempts which have been made by</span><span class="t" style="left:27.86px;top:110.26px;font-size:3.8px;font-weight:normal;color:#1a1a1a;transform:scaleX(1.0441)">individual thinkers to discuss the ultimate problems of knowledge and of life. It will be a result of no</span><span class="t" style="left:27.86px;top:115.92px;font-size:3.8px;font-weight:normal;color:#1a1a1a;transform:scaleX(1.0239)">small importance, therefore, if we can discover quite what are the problems with which philosophy deals,</span></div><svg style="left:0;top:0" width="48" height="48" viewBox="0 0 48 48"><polygon points="22.00,12.55 31.87,18.25 31.87,29.65 22.00,35.35 12.13,29.65 12.13,18.25" fill="#fff" stroke="#15864a" stroke-width="1.6" stroke-linejoin="round"/><g transform="translate(22.0 23.95)" fill="#15864a"><circle cx="0.1" cy="-5.6" r="1.7"/><path d="M-5.7 -3.4Q0 -2.5 5.8 -3.4" fill="none" stroke="#15864a" stroke-width="1.6" stroke-linecap="round"/><path d="M-1.9 -2.9H2L2.1 2L3.4 6.6L1.9 7.1L0.05 2.8L-1.8 7.1L-3.3 6.6L-2 2Z"/></g></svg></div><svg style="left:12px;top:144px" width="24" height="32" viewBox="0 0 24 32"><path fill="#2b5fd9" d="M1.4 0H14V8.6a1.4 1.4 0 0 0 1.4 1.4H24V30.5a1.5 1.5 0 0 1-1.5 1.5H1.5A1.5 1.5 0 0 1 0 30.5V1.4A1.4 1.4 0 0 1 1.4 0ZM16 0H16.4L24 7.6V8H16Z"/><path fill="#fff" d="M4 16H6.9L8.8 24.4L10.8 16H13L15 24.4L16.9 16H19.8L16.6 28H13.6L11.9 20.8L10.2 28H7.2Z"/></svg></div>
<div class="card" style="left:466px;top:587px"><div class="top"><div class="sh"></div><div class="th"><svg style="left:0;top:0" width="236" height="121" viewBox="0 0 236 121"><defs>
<linearGradient id="sk" x1="0" x2="1" y1="0" y2=".3"><stop offset="0" stop-color="#4a7cc0"/><stop offset=".5" stop-color="#5586c5"/><stop offset="1" stop-color="#6c9acf"/></linearGradient>
<filter id="c5" x="-30%" y="-30%" width="160%" height="160%"><feGaussianBlur stdDeviation="3.2"/></filter>
<filter id="c1" x="-20%" y="-20%" width="140%" height="140%"><feGaussianBlur stdDeviation=".7"/></filter>
<linearGradient id="st" x1="0" x2="1" y1="0" y2="0"><stop offset="0" stop-color="#566362"/><stop offset=".4" stop-color="#818d8c"/><stop offset=".8" stop-color="#6a7776"/><stop offset="1" stop-color="#4b5757"/></linearGradient>
<filter id="nz" x="0" y="0" width="100%" height="100%"><feTurbulence type="fractalNoise" baseFrequency=".2 .25" numOctaves="3" seed="3"/><feColorMatrix values="0 0 0 0 .1  0 0 0 0 .14  0 0 0 0 .14  1.9 0 0 0 -.8"/></filter>
<clipPath id="stc"><path d="M22 121L24 100L27 84L32 68L46 55.500L70 57L66 44L64 28L70 14L84 9.500L100 14L107 25L110 33V58L112 70L112 79L125 92L131 110L133 121Z"/></clipPath>
</defs>
<rect width="236" height="121" fill="url(#sk)"/>
<g fill="#fff" filter="url(#c5)"><ellipse cx="112" cy="4" rx="56" ry="11"/><ellipse cx="128" cy="22" rx="30" ry="20"/><ellipse cx="140" cy="44" rx="14" ry="16" opacity=".9"/><ellipse cx="132" cy="68" rx="12" ry="14" opacity=".7"/><ellipse cx="56" cy="45" rx="14" ry="11" opacity=".95"/><ellipse cx="26" cy="75" rx="5" ry="5" opacity=".6"/><ellipse cx="5" cy="86" rx="7" ry="11" opacity=".85"/><ellipse cx="142" cy="96" rx="9" ry="8" opacity=".75"/><ellipse cx="170" cy="82" rx="14" ry="6" opacity=".6"/><ellipse cx="234" cy="42" rx="5" ry="12" opacity=".8"/><ellipse cx="218" cy="114" rx="9" ry="7" opacity=".85"/><ellipse cx="232" cy="96" rx="5" ry="8" opacity=".7"/><ellipse cx="222" cy="70" rx="5" ry="3" opacity=".5"/></g>
<g filter="url(#c1)">
<path d="M22 121L24 100L27 84L32 68L46 55.500L70 57L86 60L100 72L112 79L125 92L131 110L133 121Z" fill="url(#st)"/>
<path d="M40 72L60 62L86 66L100 80L112 100L116 121L50 121L36 96Z" fill="#9ba7a5" opacity=".6"/>
<path d="M22 121L25 100L36 100L60 112L80 121Z" fill="#4d5958" opacity=".7"/>
<path d="M33 87C40 76 52 66 63 62" stroke="#465251" stroke-width="2.600" fill="none"/>
<path d="M36 99C60 91 92 100 113 119" stroke="#56625f" stroke-width="2" fill="none"/>
<path d="M72 53L96 53L101 61L69 60Z" fill="#525e5d"/>
<path d="M84 9.500C74 9 66 16 64.500 26C63 33 65 40 68 44C70 50 76 56 84 56C92 56 98 50 101 44C104 40 108 32 107 25C106 16 96 9.500 84 9.500Z" fill="#6c7978"/>
<ellipse cx="84" cy="20" rx="12" ry="7.500" fill="#9ca7a5"/>
<ellipse cx="80" cy="33" rx="8" ry="4.500" fill="#8f9b99"/>
<path d="M72 25Q78 22.500 84 26Q90 22.500 96 25L96 28.500Q90 26 84 29.500Q78 26 72 28.500Z" fill="#38433f"/>
<path d="M67 36C72 42 96 42 101 36C102 46 96 56 84 56C74 56 67 48 67 36Z" fill="#445050"/>
<ellipse cx="67" cy="28" rx="3.800" ry="9" fill="#505d5c"/><ellipse cx="104.500" cy="25" rx="3.200" ry="8" fill="#5c6968"/>
<path d="M78 60L96 63L94 70L80 66Z" fill="#3e4948"/>
<rect x="98" y="69" width="11" height="16" fill="#3c4746"/>
<rect x="101.500" y="32.500" width="8" height="28" rx="4" fill="#8b9795"/>
<path d="M101.500 38V58H104V36Z" fill="#6a7675"/>
<path d="M84 58L100 55L111 58L112.500 68L104 72.500L90 70Z" fill="#76827f"/>
<path d="M90 62L108 60M89 66L108 65" stroke="#55615f" stroke-width="1.200"/>
<rect width="236" height="121" filter="url(#nz)" clip-path="url(#stc)" opacity=".75"/>
<path d="M137 121L138 106L146 100L152 102L158 94L167 87L174 96L182 94L184 104L183 121Z" fill="#343c3c"/>
<ellipse cx="146" cy="108" rx="5.500" ry="3.800" fill="#12171a"/><ellipse cx="157" cy="102" rx="4.500" ry="3" fill="#12171a"/><ellipse cx="167" cy="94" rx="5" ry="3.200" fill="#12171a"/><ellipse cx="177.500" cy="100" rx="4" ry="2.800" fill="#12171a"/>
</g>
</svg>
<span class="t" style="font-family:&quot;Liberation Sans&quot;;left:122.90px;top:40.87px;font-size:12.2px;font-weight:bold;color:#0a0a0a;transform:scaleX(0.9292)">Aristotle’s Poetics</span></div><svg style="left:0;top:0" width="48" height="48" viewBox="0 0 48 48"><polygon points="22.00,12.55 31.87,18.25 31.87,29.65 22.00,35.35 12.13,29.65 12.13,18.25" fill="#fff" stroke="#15864a" stroke-width="1.6" stroke-linejoin="round"/><g transform="translate(22.0 23.95)" fill="#15864a"><circle cx="0.1" cy="-5.6" r="1.7"/><path d="M-5.7 -3.4Q0 -2.5 5.8 -3.4" fill="none" stroke="#15864a" stroke-width="1.6" stroke-linecap="round"/><path d="M-1.9 -2.9H2L2.1 2L3.4 6.6L1.9 7.1L0.05 2.8L-1.8 7.1L-3.3 6.6L-2 2Z"/></g></svg></div><svg style="left:12px;top:144px" width="24" height="32" viewBox="0 0 24 32"><path fill="#e4672a" d="M1.4 0H14V8.6a1.4 1.4 0 0 0 1.4 1.4H24V30.5a1.5 1.5 0 0 1-1.5 1.5H1.5A1.5 1.5 0 0 1 0 30.5V1.4A1.4 1.4 0 0 1 1.4 0ZM16 0H16.4L24 7.6V8H16Z"/><path fill="#fff" fill-rule="evenodd" d="M6.8 13.8H12.6a5 5 0 0 1 0 10H9.9V28H6.8ZM9.9 16.8V20.9H12.3a2.05 2.05 0 0 0 0-4.1Z"/></svg></div>
<div class="card" style="left:816px;top:587px"><div class="top"><div class="sh"></div><div class="th"><span class="t" style="left:102.59px;top:28.94px;font-size:3.9px;font-weight:normal;color:#444;transform:scaleX(0.9534)">Ancient Philosophy</span><span class="t" style="left:27.86px;top:47.47px;font-size:3.6px;font-weight:normal;color:#3a3a3a;transform:scaleX(1.0898)">In the Wake of Socrates: Impossible Memory</span><span class="t" style="left:27.86px;top:64.93px;font-size:3.6px;font-weight:normal;color:#3a3a3a;transform:scaleX(1.1043)">Walter Brogan</span><span class="t" style="left:27.86px;top:82.23px;font-size:3.6px;font-weight:normal;color:#3a3a3a;transform:scaleX(1.0882)">The Phaedo¹ is certainly one of the richest of Plato’s dialogues, filled with</span><span class="t" style="left:27.86px;top:90.97px;font-size:3.6px;font-weight:normal;color:#3a3a3a;transform:scaleX(1.0825)">complex images, metaphors, and arguments and layered in a dauntingly</span><span class="t" style="left:27.86px;top:99.70px;font-size:3.6px;font-weight:normal;color:#3a3a3a;transform:scaleX(1.1097)">complicated structure that one fails to attend to at one’s own peril. The aim</span><span class="t" style="left:27.86px;top:108.43px;font-size:3.6px;font-weight:normal;color:#3a3a3a;transform:scaleX(1.0893)">of this essay is to look at certain aspects of the dialogue that center on the</span><span class="t" style="left:27.86px;top:117.00px;font-size:3.6px;font-weight:normal;color:#3a3a3a;transform:scaleX(1.0687)">theme of remembrance in a specific way, namely in as much as it has to do</span></div><svg style="left:0;top:0" width="48" height="48" viewBox="0 0 48 48"><polygon points="22.00,12.55 31.87,18.25 31.87,29.65 22.00,35.35 12.13,29.65 12.13,18.25" fill="#fff" stroke="#15864a" stroke-width="1.6" stroke-linejoin="round"/><g transform="translate(22.0 23.95)" fill="#15864a"><circle cx="0.1" cy="-5.6" r="1.7"/><path d="M-5.7 -3.4Q0 -2.5 5.8 -3.4" fill="none" stroke="#15864a" stroke-width="1.6" stroke-linecap="round"/><path d="M-1.9 -2.9H2L2.1 2L3.4 6.6L1.9 7.1L0.05 2.8L-1.8 7.1L-3.3 6.6L-2 2Z"/></g></svg></div><svg style="left:12px;top:144px" width="24" height="32" viewBox="0 0 24 32"><path fill="#2b5fd9" d="M1.4 0H14V8.6a1.4 1.4 0 0 0 1.4 1.4H24V30.5a1.5 1.5 0 0 1-1.5 1.5H1.5A1.5 1.5 0 0 1 0 30.5V1.4A1.4 1.4 0 0 1 1.4 0ZM16 0H16.4L24 7.6V8H16Z"/><path fill="#fff" d="M4 16H6.9L8.8 24.4L10.8 16H13L15 24.4L16.9 16H19.8L16.6 28H13.6L11.9 20.8L10.2 28H7.2Z"/></svg></div>
<div class="card" style="left:1166px;top:587px"><div class="top"><div class="sh"></div><div class="th"><svg style="left:0;top:0" width="236" height="121" viewBox="0 0 236 121"><defs>
<filter id="g2" x="-30%" y="-30%" width="160%" height="160%"><feGaussianBlur stdDeviation="1.6"/></filter>
<filter id="g1" x="-20%" y="-20%" width="140%" height="140%"><feGaussianBlur stdDeviation=".6"/></filter>
<linearGradient id="gb" x1="0" x2="1" y1="0" y2="0"><stop offset="0" stop-color="#14566c"/><stop offset=".5" stop-color="#0f4e68"/><stop offset="1" stop-color="#0d4a62"/></linearGradient>
</defs>
<rect width="236" height="121" fill="url(#gb)"/>
<rect width="5" height="121" fill="#2c6172"/>
<path d="M1.500 20V32M2 40V58M1.500 64V76M2 98V108" stroke="#b9a98a" stroke-width="1.200" opacity=".8"/>
<path d="M190.800 34V121" stroke="#2f7088" stroke-width=".8" opacity=".8"/>
<path d="M196 62C214 74 226 90 234 110" stroke="#0a3f56" stroke-width=".8" fill="none"/>
<g filter="url(#g2)" fill="#0a2556">
<path d="M63 98C70 90 92 86 116 88C112 94 106 98 102 104C96 110 84 111 76 108C70 106 66 102 63 98Z"/>
<path d="M144 90C156 86 182 88 195 94C192 99 186 102 182 106C174 109 162 108 156 104C152 100 148 96 144 90Z"/>
</g>
<g filter="url(#g1)">
<path d="M77.500 101.500C83 97.500 94 97.500 100.500 101C95 105.500 84 106 77.500 101.500Z" fill="#9fc0cb"/>
<ellipse cx="88.900" cy="101.300" rx="4.200" ry="2.700" fill="#c98530"/>
<ellipse cx="88.900" cy="101.300" rx="1.300" ry="1.300" fill="#3a2a14"/>
<path d="M155 102.500C161 98.500 173 98.500 179.500 102C174 106.500 162 107 155 102.500Z" fill="#9fc0cb"/>
<ellipse cx="167.400" cy="102.400" rx="4.200" ry="2.700" fill="#c98530"/>
<ellipse cx="167.400" cy="102.400" rx="1.300" ry="1.300" fill="#3a2a14"/>
</g>
</svg><span class="t" style="font-family:&quot;Liberation Serif&quot;;left:30.65px;top:4.79px;font-size:39px;font-weight:normal;color:#fbfaf6;font-style:italic;-webkit-text-stroke:.75px #fbfaf6;transform:scaleX(1.0852)">The</span><span class="t" style="font-family:&quot;Liberation Serif&quot;;left:103.38px;top:4.36px;font-size:39.5px;font-weight:normal;color:#fbfaf6;-webkit-text-stroke:.75px #fbfaf6;transform:scaleX(1.0885)">G</span><span class="t" style="font-family:&quot;Liberation Serif&quot;;left:133.72px;top:10.71px;font-size:32px;font-weight:normal;color:#fbfaf6;-webkit-text-stroke:.75px #fbfaf6;transform:scaleX(1.0647)">REAT</span><span class="t" style="font-family:&quot;Liberation Serif&quot;;left:46.78px;top:36.26px;font-size:39.5px;font-weight:normal;color:#fbfaf6;-webkit-text-stroke:.75px #fbfaf6;transform:scaleX(1.0885)">G</span><span class="t" style="font-family:&quot;Liberation Serif&quot;;left:76.61px;top:41.77px;font-size:33px;font-weight:normal;color:#fbfaf6;-webkit-text-stroke:.75px #fbfaf6;transform:scaleX(1.1793)">ATSBY</span></div><svg style="left:0;top:0" width="48" height="48" viewBox="0 0 48 48"><path d="M20.71 14.19Q22.00 11.70 23.29 14.19L32.91 32.71Q34.20 35.20 31.40 35.20L12.60 35.20Q9.80 35.20 11.09 32.71Z" fill="#fff" stroke="#fca516" stroke-width="1.7" stroke-linejoin="round"/><g fill="#fca516"><circle cx="22" cy="21.9" r="1.15"/><path d="M18 24.2Q22 24.9 26 24.2" fill="none" stroke="#fca516" stroke-width=".95" stroke-linecap="round"/><path d="M20.9 24.3H23.1L23.2 28.4L24.6 32.3L23.7 32.7L22 29L20.3 32.7L19.4 32.3L20.8 28.4Z"/></g></svg></div><svg style="left:12px;top:144px" width="24" height="32" viewBox="0 0 24 32"><path fill="#fd0101" d="M1.4 0H14V8.6a1.4 1.4 0 0 0 1.4 1.4H24V30.5a1.5 1.5 0 0 1-1.5 1.5H1.5A1.5 1.5 0 0 1 0 30.5V1.4A1.4 1.4 0 0 1 1.4 0ZM16 0H16.4L24 7.6V8H16Z"/><g fill="none" stroke="#fff" stroke-width="1.15" stroke-linecap="round" stroke-linejoin="round"><path d="M5.4 26.9C8.2 24.6 10.3 21.6 11.4 18.6C12.6 15.4 13 12.4 11.6 12.2C10.1 12 10.1 15.2 11.6 18.6C12.8 21 15.8 23.2 18.2 23.3C20 23.4 20 21.6 18.4 21.5C14.2 21.4 8.6 23.6 5.4 26.9Z"/></g><circle cx="5.6" cy="26.7" r="1.25" fill="#fff"/></svg></div>
<span class="t" style="left:79.45px;top:27.90px;font-size:21.5px;font-weight:normal;color:#fff;-webkit-text-stroke:.35px #fff;transform:scaleX(0.9711)">Panorama</span>
<span class="t" style="left:105.39px;top:80.51px;font-size:17px;font-weight:normal;color:#3c3c3c;transform:scaleX(0.9899)">Search</span>
<span class="t" style="left:542.98px;top:80.25px;font-size:14px;font-weight:bold;color:#141414;transform:scaleX(0.8528)">NEW FOLDER</span>
<span class="t" style="left:682.66px;top:80.25px;font-size:14px;font-weight:bold;color:#141414;transform:scaleX(0.8754)">UPLOAD</span>
<span class="t" style="left:115.60px;top:170.46px;font-size:16px;font-weight:normal;color:#0c6ea8;transform:scaleX(1.0434)">Home</span>
<span class="t" style="left:115.71px;top:217.10px;font-size:21.5px;font-weight:normal;color:#0c6ea8;-webkit-text-stroke:.6px #0c6ea8;transform:scaleX(0.9963)">Folders</span>
<span class="t" style="left:115.79px;top:340.10px;font-size:21.5px;font-weight:normal;color:#0c6ea8;-webkit-text-stroke:.6px #0c6ea8;transform:scaleX(0.9346)">Files</span>
<span class="t" style="left:185.35px;top:265.76px;font-size:16px;font-weight:normal;color:#17171d;transform:scaleX(0.9881)">Literary Theory</span>
<span class="t" style="left:185.03px;top:287.87px;font-size:13.5px;font-weight:normal;color:#5c5c64;transform:scaleX(0.9474)">Wed, Mar 1, 2023, 11:47:28 AM</span>
<span class="t" style="left:535.36px;top:265.76px;font-size:16px;font-weight:normal;color:#17171d;transform:scaleX(0.9754)">Philisophy</span>
<span class="t" style="left:535.02px;top:287.87px;font-size:13.5px;font-weight:normal;color:#5c5c64;transform:scaleX(0.9653)">Tue, Feb 28, 2023, 3:46:59 PM</span>
<span class="t" style="left:174.96px;top:521.46px;font-size:16px;font-weight:normal;color:#17171d;transform:scaleX(0.9838)">Discussion Topics.docx</span>
<span class="t" style="left:175.13px;top:542.97px;font-size:13.5px;font-weight:normal;color:#5c5c64;transform:scaleX(0.9457)">Thu, Mar 2, 2023, 12:23:05 PM</span>
<span class="t" style="left:524.93px;top:521.46px;font-size:16px;font-weight:normal;color:#17171d;transform:scaleX(1.0113)">Introduction to Literary Theory.pptx</span>
<span class="t" style="left:525.13px;top:542.97px;font-size:13.5px;font-weight:normal;color:#5c5c64;transform:scaleX(0.9457)">Thu, Mar 2, 2023, 12:20:53 PM</span>
<span class="t" style="left:874.98px;top:521.46px;font-size:16px;font-weight:normal;color:#17171d;transform:scaleX(0.9612)">Philosophy Research Assignment.d...</span>
<span class="t" style="left:875.15px;top:542.97px;font-size:13.5px;font-weight:normal;color:#5c5c64;transform:scaleX(0.9243)">Thu, Mar 2, 2023, 12:15:33 PM</span>
<span class="t" style="left:1225.00px;top:521.46px;font-size:16px;font-weight:normal;color:#17171d;transform:scaleX(0.9397)">Literary Theory Essay 1.docx</span>
<span class="t" style="left:1225.15px;top:542.97px;font-size:13.5px;font-weight:normal;color:#5c5c64;transform:scaleX(0.9297)">Thu, Mar 2, 2023, 12:13:58 PM</span>
<span class="t" style="left:174.94px;top:735.46px;font-size:16px;font-weight:normal;color:#17171d;transform:scaleX(0.9994)">History of Philosophy.docx</span>
<span class="t" style="left:175.15px;top:756.97px;font-size:13.5px;font-weight:normal;color:#5c5c64;transform:scaleX(0.9291)">Thu, Mar 2, 2023, 12:10:26 PM</span>
<span class="t" style="left:524.96px;top:735.46px;font-size:16px;font-weight:normal;color:#17171d;transform:scaleX(0.9838)">Aristotle Presentation.pptx</span>
<span class="t" style="left:525.15px;top:756.97px;font-size:13.5px;font-weight:normal;color:#5c5c64;transform:scaleX(0.9318)">Thu, Mar 2, 2023, 12:04:51 PM</span>
<span class="t" style="left:874.95px;top:735.46px;font-size:16px;font-weight:normal;color:#17171d;transform:scaleX(0.9902)">Ancient Philosphy.docx</span>
<span class="t" style="left:875.13px;top:756.97px;font-size:13.5px;font-weight:normal;color:#5c5c64;transform:scaleX(0.9475)">Thu, Mar 2, 2023, 11:58:25 AM</span>
<span class="t" style="left:1224.96px;top:735.46px;font-size:16px;font-weight:normal;color:#17171d;transform:scaleX(0.9808)">The Great Gatsby.pdf</span>
<span class="t" style="left:1225.13px;top:756.97px;font-size:13.5px;font-weight:normal;color:#5c5c64;transform:scaleX(0.9524)">Thu, Mar 2, 2023, 11:54:06 AM</span>
</div></div>
</body>
</html>
